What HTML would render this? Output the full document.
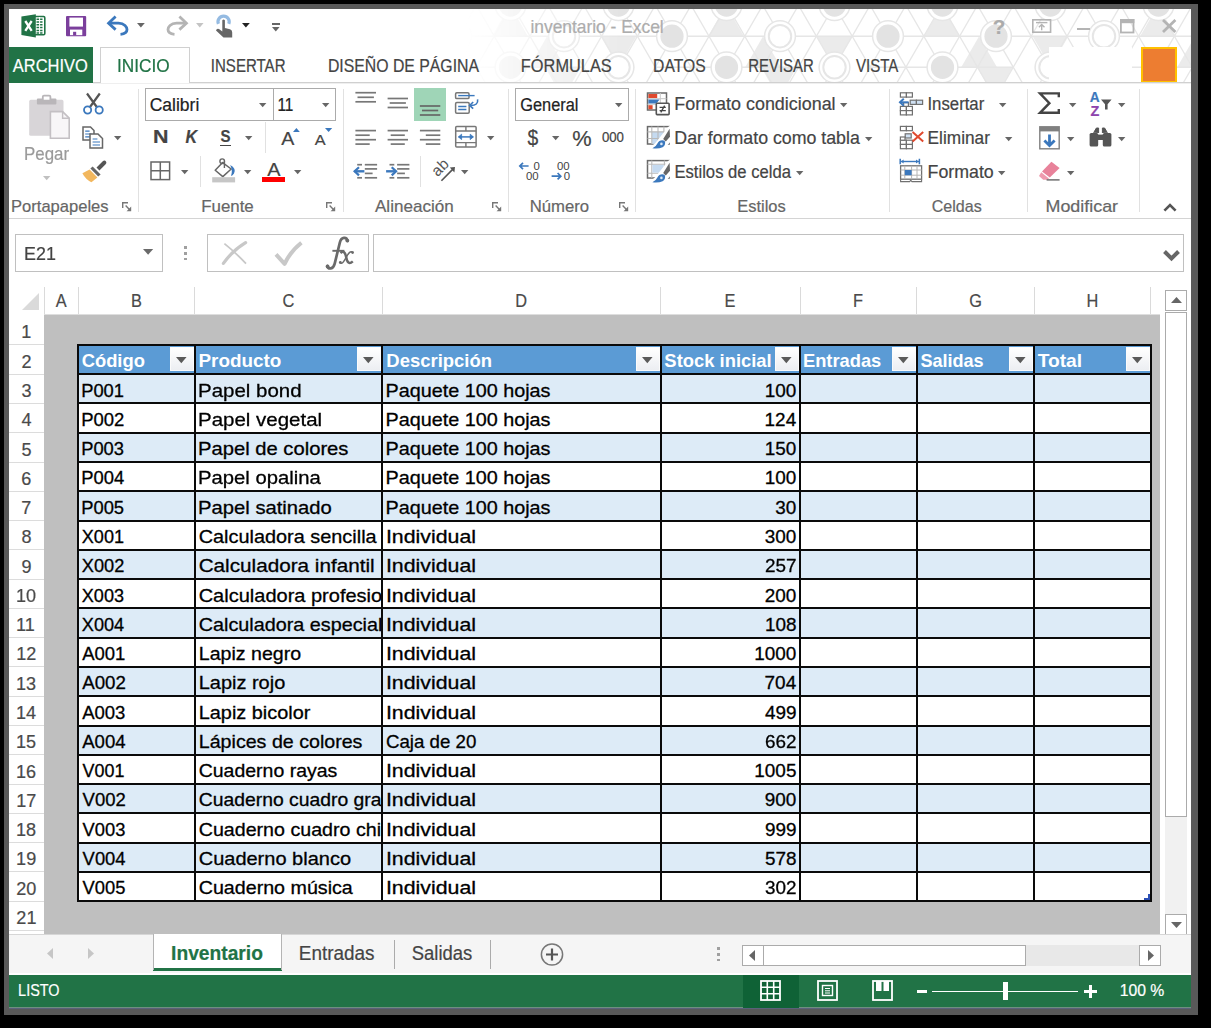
<!DOCTYPE html>
<html><head><meta charset="utf-8"><title>inventario - Excel</title><style>
html,body{margin:0;padding:0;background:#000;}
body{width:1211px;height:1028px;position:relative;overflow:hidden;font-family:"Liberation Sans",sans-serif;}
.a{position:absolute;box-sizing:border-box;}
.t{position:absolute;white-space:pre;line-height:1;transform-origin:0 0;-webkit-text-stroke:0.2px;}
svg{overflow:visible;}
</style></head><body>
<div class="a " style="left:4px;top:4px;width:1194px;height:1011px;background:#595959;"></div>
<div class="a " style="left:9px;top:9px;width:1182px;height:999px;background:#fff;"></div>
<div class="a" style="left:451px;top:9px;width:740px;height:74px;overflow:hidden;-webkit-mask-image:linear-gradient(90deg,transparent 15px,#000 170px);mask-image:linear-gradient(90deg,transparent 15px,#000 170px);"><svg width="740" height="74" viewBox="0 0 740 74" style="position:absolute;left:0;top:0"><path d="M-282.4 27.2 L-246.6 27.2 L-264.5 58.3Z" fill="#ebebeb"/><path d="M-174.9 27.2 L-139.1 27.2 L-157.0 -3.9Z" fill="#ebebeb"/><path d="M-121.9 58.3 L-86.1 58.3 L-104.0 89.4Z" fill="#ebebeb"/><path d="M-353.8 58.3 L-318.0 58.3 L-335.9 27.2Z" fill="#ebebeb"/><path d="M-66.4 27.2 L-30.6 27.2 L-48.5 58.3Z" fill="#ebebeb"/><path d="M41.1 27.2 L76.9 27.2 L59.0 -3.9Z" fill="#ebebeb"/><path d="M94.1 58.3 L129.9 58.3 L112.0 89.4Z" fill="#ebebeb"/><path d="M-137.8 58.3 L-102.0 58.3 L-119.9 27.2Z" fill="#ebebeb"/><path d="M149.6 27.2 L185.4 27.2 L167.5 58.3Z" fill="#ebebeb"/><path d="M257.1 27.2 L292.9 27.2 L275.0 -3.9Z" fill="#ebebeb"/><path d="M310.1 58.3 L345.9 58.3 L328.0 89.4Z" fill="#ebebeb"/><path d="M78.2 58.3 L114.0 58.3 L96.1 27.2Z" fill="#ebebeb"/><path d="M365.6 27.2 L401.4 27.2 L383.5 58.3Z" fill="#ebebeb"/><path d="M473.1 27.2 L508.9 27.2 L491.0 -3.9Z" fill="#ebebeb"/><path d="M526.1 58.3 L561.9 58.3 L544.0 89.4Z" fill="#ebebeb"/><path d="M294.2 58.3 L330.0 58.3 L312.1 27.2Z" fill="#ebebeb"/><path d="M581.6 27.2 L617.4 27.2 L599.5 58.3Z" fill="#ebebeb"/><path d="M689.1 27.2 L724.9 27.2 L707.0 -3.9Z" fill="#ebebeb"/><path d="M742.1 58.3 L777.9 58.3 L760.0 89.4Z" fill="#ebebeb"/><path d="M510.2 58.3 L546.0 58.3 L528.1 27.2Z" fill="#ebebeb"/><path d="M797.6 27.2 L833.4 27.2 L815.5 58.3Z" fill="#ebebeb"/><path d="M905.1 27.2 L940.9 27.2 L923.0 -3.9Z" fill="#ebebeb"/><path d="M958.1 58.3 L993.9 58.3 L976.0 89.4Z" fill="#ebebeb"/><path d="M726.2 58.3 L762.0 58.3 L744.1 27.2Z" fill="#ebebeb"/><path d="M1013.6 27.2 L1049.4 27.2 L1031.5 58.3Z" fill="#ebebeb"/><path d="M1121.1 27.2 L1156.9 27.2 L1139.0 -3.9Z" fill="#ebebeb"/><path d="M1174.1 58.3 L1209.9 58.3 L1192.0 89.4Z" fill="#ebebeb"/><path d="M942.2 58.3 L978.0 58.3 L960.1 27.2Z" fill="#ebebeb"/><path d="M0 27.2H740" stroke="#e6e6e6" stroke-width="1.4"/><path d="M-228.6 58.3H-85.4" stroke="#e6e6e6" stroke-width="1.4"/><path d="M-12.6 58.3H130.6" stroke="#e6e6e6" stroke-width="1.4"/><path d="M203.4 58.3H346.6" stroke="#e6e6e6" stroke-width="1.4"/><path d="M419.4 58.3H562.6" stroke="#e6e6e6" stroke-width="1.4"/><path d="M635.4 58.3H778.6" stroke="#e6e6e6" stroke-width="1.4"/><path d="M851.4 58.3H994.6" stroke="#e6e6e6" stroke-width="1.4"/><path d="M1067.4 58.3H1210.6" stroke="#e6e6e6" stroke-width="1.4"/><path d="M1283.4 58.3H1426.6" stroke="#e6e6e6" stroke-width="1.4"/><path d="M-85.7 -10 L-31.4 84" stroke="#e6e6e6" stroke-width="1.3" fill="none"/><path d="M-42.7 -10 L-97.0 84" stroke="#e6e6e6" stroke-width="1.3" fill="none"/><path d="M-49.9 -10 L4.4 84" stroke="#e6e6e6" stroke-width="1.3" fill="none"/><path d="M-6.9 -10 L-61.2 84" stroke="#e6e6e6" stroke-width="1.3" fill="none"/><path d="M-14.1 -10 L40.2 84" stroke="#e6e6e6" stroke-width="1.3" fill="none"/><path d="M28.9 -10 L-25.4 84" stroke="#e6e6e6" stroke-width="1.3" fill="none"/><path d="M21.7 -10 L76.0 84" stroke="#e6e6e6" stroke-width="1.3" fill="none"/><path d="M64.7 -10 L10.4 84" stroke="#e6e6e6" stroke-width="1.3" fill="none"/><path d="M57.5 -10 L111.8 84" stroke="#e6e6e6" stroke-width="1.3" fill="none"/><path d="M100.5 -10 L46.2 84" stroke="#e6e6e6" stroke-width="1.3" fill="none"/><path d="M93.3 -10 L147.6 84" stroke="#e6e6e6" stroke-width="1.3" fill="none"/><path d="M136.3 -10 L82.0 84" stroke="#e6e6e6" stroke-width="1.3" fill="none"/><path d="M129.1 -10 L183.4 84" stroke="#e6e6e6" stroke-width="1.3" fill="none"/><path d="M172.1 -10 L117.8 84" stroke="#e6e6e6" stroke-width="1.3" fill="none"/><path d="M164.9 -10 L219.2 84" stroke="#e6e6e6" stroke-width="1.3" fill="none"/><path d="M207.9 -10 L153.6 84" stroke="#e6e6e6" stroke-width="1.3" fill="none"/><path d="M200.7 -10 L255.0 84" stroke="#e6e6e6" stroke-width="1.3" fill="none"/><path d="M243.7 -10 L189.4 84" stroke="#e6e6e6" stroke-width="1.3" fill="none"/><path d="M236.5 -10 L290.8 84" stroke="#e6e6e6" stroke-width="1.3" fill="none"/><path d="M279.5 -10 L225.2 84" stroke="#e6e6e6" stroke-width="1.3" fill="none"/><path d="M272.3 -10 L326.6 84" stroke="#e6e6e6" stroke-width="1.3" fill="none"/><path d="M315.3 -10 L261.0 84" stroke="#e6e6e6" stroke-width="1.3" fill="none"/><path d="M308.1 -10 L362.4 84" stroke="#e6e6e6" stroke-width="1.3" fill="none"/><path d="M351.1 -10 L296.8 84" stroke="#e6e6e6" stroke-width="1.3" fill="none"/><path d="M343.9 -10 L398.2 84" stroke="#e6e6e6" stroke-width="1.3" fill="none"/><path d="M386.9 -10 L332.6 84" stroke="#e6e6e6" stroke-width="1.3" fill="none"/><path d="M379.7 -10 L434.0 84" stroke="#e6e6e6" stroke-width="1.3" fill="none"/><path d="M422.7 -10 L368.4 84" stroke="#e6e6e6" stroke-width="1.3" fill="none"/><path d="M415.5 -10 L469.8 84" stroke="#e6e6e6" stroke-width="1.3" fill="none"/><path d="M458.5 -10 L404.2 84" stroke="#e6e6e6" stroke-width="1.3" fill="none"/><path d="M451.3 -10 L505.6 84" stroke="#e6e6e6" stroke-width="1.3" fill="none"/><path d="M494.3 -10 L440.0 84" stroke="#e6e6e6" stroke-width="1.3" fill="none"/><path d="M487.1 -10 L541.4 84" stroke="#e6e6e6" stroke-width="1.3" fill="none"/><path d="M530.1 -10 L475.8 84" stroke="#e6e6e6" stroke-width="1.3" fill="none"/><path d="M522.9 -10 L577.2 84" stroke="#e6e6e6" stroke-width="1.3" fill="none"/><path d="M565.9 -10 L511.6 84" stroke="#e6e6e6" stroke-width="1.3" fill="none"/><path d="M558.7 -10 L613.0 84" stroke="#e6e6e6" stroke-width="1.3" fill="none"/><path d="M601.7 -10 L547.4 84" stroke="#e6e6e6" stroke-width="1.3" fill="none"/><path d="M594.5 -10 L648.8 84" stroke="#e6e6e6" stroke-width="1.3" fill="none"/><path d="M637.5 -10 L583.2 84" stroke="#e6e6e6" stroke-width="1.3" fill="none"/><path d="M630.3 -10 L684.6 84" stroke="#e6e6e6" stroke-width="1.3" fill="none"/><path d="M673.3 -10 L619.0 84" stroke="#e6e6e6" stroke-width="1.3" fill="none"/><path d="M666.1 -10 L720.4 84" stroke="#e6e6e6" stroke-width="1.3" fill="none"/><path d="M709.1 -10 L654.8 84" stroke="#e6e6e6" stroke-width="1.3" fill="none"/><path d="M701.9 -10 L756.2 84" stroke="#e6e6e6" stroke-width="1.3" fill="none"/><path d="M744.9 -10 L690.6 84" stroke="#e6e6e6" stroke-width="1.3" fill="none"/><path d="M737.7 -10 L792.0 84" stroke="#e6e6e6" stroke-width="1.3" fill="none"/><path d="M780.7 -10 L726.4 84" stroke="#e6e6e6" stroke-width="1.3" fill="none"/><path d="M773.5 -10 L827.8 84" stroke="#e6e6e6" stroke-width="1.3" fill="none"/><path d="M816.5 -10 L762.2 84" stroke="#e6e6e6" stroke-width="1.3" fill="none"/><path d="M809.3 -10 L863.6 84" stroke="#e6e6e6" stroke-width="1.3" fill="none"/><path d="M852.3 -10 L798.0 84" stroke="#e6e6e6" stroke-width="1.3" fill="none"/><circle cx="5.0" cy="27.2" r="15.4" fill="#fff" stroke="#e6e6e6" stroke-width="1.5"/><circle cx="5.0" cy="27.2" r="11.6" fill="#e3e3e3"/><circle cx="-48.5" cy="58.3" r="15.4" fill="#fff" stroke="#e6e6e6" stroke-width="1.5"/><circle cx="-48.5" cy="58.3" r="11.2" fill="#fff" stroke="#e6e6e6" stroke-width="2"/><circle cx="-48.5" cy="-3.9" r="15.4" fill="#fff" stroke="#e6e6e6" stroke-width="1.5"/><circle cx="-48.5" cy="-3.9" r="11.6" fill="#e3e3e3"/><circle cx="113.0" cy="27.2" r="15.4" fill="#fff" stroke="#e6e6e6" stroke-width="1.5"/><circle cx="113.0" cy="27.2" r="11.2" fill="#fff" stroke="#e6e6e6" stroke-width="2"/><circle cx="59.5" cy="58.3" r="15.4" fill="#fff" stroke="#e6e6e6" stroke-width="1.5"/><circle cx="59.5" cy="58.3" r="11.6" fill="#e3e3e3"/><circle cx="59.5" cy="-3.9" r="15.4" fill="#fff" stroke="#e6e6e6" stroke-width="1.5"/><circle cx="59.5" cy="-3.9" r="11.6" fill="#e3e3e3"/><circle cx="221.0" cy="27.2" r="15.4" fill="#fff" stroke="#e6e6e6" stroke-width="1.5"/><circle cx="221.0" cy="27.2" r="11.6" fill="#e3e3e3"/><circle cx="167.5" cy="58.3" r="15.4" fill="#fff" stroke="#e6e6e6" stroke-width="1.5"/><circle cx="167.5" cy="58.3" r="11.2" fill="#fff" stroke="#e6e6e6" stroke-width="2"/><circle cx="167.5" cy="-3.9" r="15.4" fill="#fff" stroke="#e6e6e6" stroke-width="1.5"/><circle cx="167.5" cy="-3.9" r="11.6" fill="#e3e3e3"/><circle cx="329.0" cy="27.2" r="15.4" fill="#fff" stroke="#e6e6e6" stroke-width="1.5"/><circle cx="329.0" cy="27.2" r="11.2" fill="#fff" stroke="#e6e6e6" stroke-width="2"/><circle cx="275.5" cy="58.3" r="15.4" fill="#fff" stroke="#e6e6e6" stroke-width="1.5"/><circle cx="275.5" cy="58.3" r="11.6" fill="#e3e3e3"/><circle cx="275.5" cy="-3.9" r="15.4" fill="#fff" stroke="#e6e6e6" stroke-width="1.5"/><circle cx="275.5" cy="-3.9" r="11.6" fill="#e3e3e3"/><circle cx="437.0" cy="27.2" r="15.4" fill="#fff" stroke="#e6e6e6" stroke-width="1.5"/><circle cx="437.0" cy="27.2" r="11.6" fill="#e3e3e3"/><circle cx="383.5" cy="58.3" r="15.4" fill="#fff" stroke="#e6e6e6" stroke-width="1.5"/><circle cx="383.5" cy="58.3" r="11.2" fill="#fff" stroke="#e6e6e6" stroke-width="2"/><circle cx="383.5" cy="-3.9" r="15.4" fill="#fff" stroke="#e6e6e6" stroke-width="1.5"/><circle cx="383.5" cy="-3.9" r="11.6" fill="#e3e3e3"/><circle cx="545.0" cy="27.2" r="15.4" fill="#fff" stroke="#e6e6e6" stroke-width="1.5"/><circle cx="545.0" cy="27.2" r="11.6" fill="#e3e3e3"/><circle cx="491.5" cy="58.3" r="15.4" fill="#fff" stroke="#e6e6e6" stroke-width="1.5"/><circle cx="491.5" cy="58.3" r="11.6" fill="#e3e3e3"/><circle cx="491.5" cy="-3.9" r="15.4" fill="#fff" stroke="#e6e6e6" stroke-width="1.5"/><circle cx="491.5" cy="-3.9" r="11.6" fill="#e3e3e3"/><circle cx="653.0" cy="27.2" r="15.4" fill="#fff" stroke="#e6e6e6" stroke-width="1.5"/><circle cx="653.0" cy="27.2" r="11.2" fill="#fff" stroke="#e6e6e6" stroke-width="2"/><circle cx="599.5" cy="58.3" r="15.4" fill="#fff" stroke="#e6e6e6" stroke-width="1.5"/><circle cx="599.5" cy="58.3" r="11.2" fill="#fff" stroke="#e6e6e6" stroke-width="2"/><circle cx="599.5" cy="-3.9" r="15.4" fill="#fff" stroke="#e6e6e6" stroke-width="1.5"/><circle cx="599.5" cy="-3.9" r="11.6" fill="#e3e3e3"/><circle cx="761.0" cy="27.2" r="15.4" fill="#fff" stroke="#e6e6e6" stroke-width="1.5"/><circle cx="761.0" cy="27.2" r="11.2" fill="#fff" stroke="#e6e6e6" stroke-width="2"/><circle cx="707.5" cy="58.3" r="15.4" fill="#fff" stroke="#e6e6e6" stroke-width="1.5"/><circle cx="707.5" cy="58.3" r="11.6" fill="#e3e3e3"/><circle cx="707.5" cy="-3.9" r="15.4" fill="#fff" stroke="#e6e6e6" stroke-width="1.5"/><circle cx="707.5" cy="-3.9" r="11.6" fill="#e3e3e3"/></svg></div>
<svg class="a" style="left:21px;top:14px;" width="25" height="24" viewBox="0 0 25 24"><rect x="13" y="2.5" width="10.8" height="18.2" rx="1.2" fill="#fff" stroke="#217346" stroke-width="1.6"/><path d="M15.5 5.2H21.5M15.5 8H21.5M15.5 10.8H21.5M15.5 13.6H21.5M15.5 16.4H21.5M15.5 19H21.5" stroke="#217346" stroke-width="1.5"/><path d="M18.6 3V20" stroke="#fff" stroke-width="1"/><path d="M0.4 2.6 L14.8 0.2 L14.8 23.6 L0.4 20.9Z" fill="#217346"/><path d="M4.3 7 L10.7 16.8 M10.7 7 L4.3 16.8" stroke="#fff" stroke-width="2.3" fill="none"/></svg>
<svg class="a" style="left:65.7px;top:15.8px;" width="20.2" height="20.2" viewBox="0 0 20.2 20.2"><rect x="0" y="0" width="20.2" height="20.2" rx="1" fill="#7b3f9c"/><rect x="3.4" y="1.6" width="13.6" height="9" fill="#fff"/><rect x="4" y="13.6" width="12.3" height="5.6" fill="#fff"/><rect x="7.1" y="15.8" width="3.1" height="3.6" fill="#7b3f9c"/></svg>
<svg class="a" style="left:107px;top:15px;" width="23" height="21" viewBox="0 0 23 21"><path d="M2 8.2 H11.5 C17.5 8.2 20 12 20 14.5 C20 17.3 17 19 13.5 19.3" fill="none" stroke="#3b78bd" stroke-width="2.8"/><path d="M8.6 1.6 L1.6 8.2 L8.6 14.6" fill="none" stroke="#3b78bd" stroke-width="2.8"/></svg>
<svg class="a" style="left:137.2px;top:23.2px;" width="7.8" height="4.6" viewBox="0 0 7.8 4.6"><path d="M0 0 L7.8 0 L3.9 4.6Z" fill="#666"/></svg>
<svg class="a" style="left:165px;top:15px;" width="23" height="21" viewBox="0 0 23 21"><path d="M21 8.2 H11.5 C5.5 8.2 3 12 3 14.5 C3 17.3 6 19 9.5 19.3" fill="none" stroke="#b4b4b4" stroke-width="2.8"/><path d="M14.4 1.6 L21.4 8.2 L14.4 14.6" fill="none" stroke="#b4b4b4" stroke-width="2.8"/></svg>
<svg class="a" style="left:195.8px;top:23.2px;" width="7.6" height="4.4" viewBox="0 0 7.6 4.4"><path d="M0 0 L7.6 0 L3.8 4.4Z" fill="#c4c4c4"/></svg>
<svg class="a" style="left:214px;top:13px;" width="20" height="26" viewBox="0 0 20 26"><path d="M4.4 10.8 A5.6 5.6 0 1 1 14.8 10.8" fill="none" stroke="#95bbe2" stroke-width="3.2"/><path d="M8.3 7.2 Q9.6 6 10.9 7.2 V15 L16 16.2 Q18.4 17 18.2 19.5 V24.6 H9.5 L2 17.4 Q2.6 15.2 5 16 L8.3 18.4Z" fill="#666"/></svg>
<svg class="a" style="left:242.3px;top:23.2px;" width="7.8" height="4.6" viewBox="0 0 7.8 4.6"><path d="M0 0 L7.8 0 L3.9 4.6Z" fill="#222"/></svg>
<div class="a " style="left:272px;top:22.6px;width:7.6px;height:2px;background:#666;"></div>
<svg class="a" style="left:272px;top:27.4px;" width="7.6" height="4.6" viewBox="0 0 7.6 4.6"><path d="M0 0 L7.6 0 L3.8 4.6Z" fill="#666"/></svg>
<span class="t" style="left:530px;top:18px;font-size:18.6px;color:#adadad;transform:translateX(0.44px) scaleX(0.9346);">inventario - Excel</span>
<span class="t" style="left:992px;top:18px;font-size:19.6px;color:#ababab;font-weight:700;transform:translateX(0.86px) scaleX(1.0459);">?</span>
<svg class="a" style="left:1031.8px;top:19.2px;" width="19.4" height="14" viewBox="0 0 19.4 14"><rect x="0.8" y="0.8" width="17.8" height="12.4" fill="none" stroke="#b4b4b4" stroke-width="1.6"/><path d="M4 3.6 H15.4" stroke="#b4b4b4" stroke-width="1.4"/><path d="M9.7 11.2 V5.6 M6.9 8.2 L9.7 5.4 L12.5 8.2" stroke="#b4b4b4" stroke-width="1.4" fill="none"/></svg>
<div class="a " style="left:1076.6px;top:27.6px;width:13.6px;height:2.8px;background:#b4b4b4;"></div>
<svg class="a" style="left:1119.8px;top:19px;" width="14.4" height="14.4" viewBox="0 0 14.4 14.4"><rect x="0.9" y="0.9" width="12.6" height="12.6" fill="none" stroke="#b4b4b4" stroke-width="1.8"/><rect x="0" y="0" width="14.4" height="4.2" fill="#b4b4b4"/></svg>
<svg class="a" style="left:1162.2px;top:19.2px;" width="14.4" height="14" viewBox="0 0 14.4 14"><path d="M1 1 L13.4 13 M13.4 1 L1 13" stroke="#b4b4b4" stroke-width="2.8" fill="none"/></svg>
<div class="a " style="left:1049px;top:47px;width:83px;height:35px;background:#fff;"></div>
<div class="a " style="left:1141px;top:47px;width:36px;height:36px;background:#ed7d31;border:2px solid #ffc000;"></div>
<div class="a " style="left:9px;top:47px;width:84px;height:36px;background:#217346;"></div>
<span class="t" style="left:12px;top:58px;font-size:17.5px;color:#fff;transform:translateX(0.77px) scaleX(0.9409);">ARCHIVO</span>
<div class="a " style="left:93px;top:82px;width:1098px;height:1px;background:#d0d0d0;"></div>
<div class="a " style="left:93px;top:83px;width:1098px;height:1px;background:#efefef;"></div>
<div class="a " style="left:100px;top:47px;width:90px;height:36px;background:#fff;border:1px solid #d0d0d0;border-bottom:none;"></div>
<span class="t" style="left:117px;top:58px;font-size:17.5px;color:#217346;transform:scaleX(0.9839);">INICIO</span>
<span class="t" style="left:210px;top:58px;font-size:17.5px;color:#444;transform:translateX(0.81px) scaleX(0.8599);">INSERTAR</span>
<span class="t" style="left:327px;top:58px;font-size:17.5px;color:#444;transform:translateX(0.90px) scaleX(0.9036);">DISEÑO DE PÁGINA</span>
<span class="t" style="left:520px;top:58px;font-size:17.5px;color:#444;transform:translateX(0.86px) scaleX(0.9348);">FÓRMULAS</span>
<span class="t" style="left:653px;top:58px;font-size:17.5px;color:#444;transform:translateX(0.11px) scaleX(0.8958);">DATOS</span>
<span class="t" style="left:748px;top:58px;font-size:17.5px;color:#444;transform:translateX(0.17px) scaleX(0.8555);">REVISAR</span>
<span class="t" style="left:855px;top:58px;font-size:17.5px;color:#444;transform:translateX(0.93px) scaleX(0.8601);">VISTA</span>
<div class="a " style="left:138px;top:89px;width:1px;height:123px;background:#e1e1e1;"></div>
<div class="a " style="left:343px;top:89px;width:1px;height:123px;background:#e1e1e1;"></div>
<div class="a " style="left:508px;top:89px;width:1px;height:123px;background:#e1e1e1;"></div>
<div class="a " style="left:635px;top:89px;width:1px;height:123px;background:#e1e1e1;"></div>
<div class="a " style="left:889px;top:89px;width:1px;height:123px;background:#e1e1e1;"></div>
<div class="a " style="left:1027px;top:89px;width:1px;height:123px;background:#e1e1e1;"></div>
<div class="a " style="left:1139px;top:89px;width:1px;height:123px;background:#e1e1e1;"></div>
<span class="t" style="left:11px;top:198px;font-size:16.4px;color:#666;transform:translateX(0.04px) scaleX(1.0094);">Portapapeles</span>
<svg class="a" style="left:122px;top:202px;" width="10" height="10" viewBox="0 0 10 10"><path d="M0.7 6 V0.7 H6" fill="none" stroke="#777" stroke-width="1.4"/><path d="M3.6 3.6 L8.4 8.4" stroke="#777" stroke-width="1.4"/><path d="M9.2 4.6 V9.2 H4.6Z" fill="#777"/></svg>
<span class="t" style="left:201px;top:198px;font-size:16.4px;color:#666;transform:translateX(0.22px) scaleX(1.0289);">Fuente</span>
<svg class="a" style="left:326px;top:202px;" width="10" height="10" viewBox="0 0 10 10"><path d="M0.7 6 V0.7 H6" fill="none" stroke="#777" stroke-width="1.4"/><path d="M3.6 3.6 L8.4 8.4" stroke="#777" stroke-width="1.4"/><path d="M9.2 4.6 V9.2 H4.6Z" fill="#777"/></svg>
<span class="t" style="left:374px;top:198px;font-size:16.4px;color:#666;transform:translateX(0.97px) scaleX(1.0405);">Alineación</span>
<svg class="a" style="left:491.5px;top:202px;" width="10" height="10" viewBox="0 0 10 10"><path d="M0.7 6 V0.7 H6" fill="none" stroke="#777" stroke-width="1.4"/><path d="M3.6 3.6 L8.4 8.4" stroke="#777" stroke-width="1.4"/><path d="M9.2 4.6 V9.2 H4.6Z" fill="#777"/></svg>
<span class="t" style="left:529px;top:198px;font-size:16.4px;color:#666;transform:translateX(0.63px) scaleX(1.0196);">Número</span>
<svg class="a" style="left:619px;top:202px;" width="10" height="10" viewBox="0 0 10 10"><path d="M0.7 6 V0.7 H6" fill="none" stroke="#777" stroke-width="1.4"/><path d="M3.6 3.6 L8.4 8.4" stroke="#777" stroke-width="1.4"/><path d="M9.2 4.6 V9.2 H4.6Z" fill="#777"/></svg>
<span class="t" style="left:737px;top:198px;font-size:16.4px;color:#666;transform:translateX(0.25px) scaleX(1.0051);">Estilos</span>
<span class="t" style="left:931px;top:198px;font-size:16.4px;color:#666;transform:translateX(0.78px) scaleX(0.9794);">Celdas</span>
<span class="t" style="left:1045px;top:198px;font-size:16.4px;color:#666;transform:translateX(0.53px) scaleX(1.0907);">Modificar</span>
<svg class="a" style="left:1163px;top:202.6px;" width="14" height="9" viewBox="0 0 14 9"><path d="M1.4 7.6 L7 2 L12.6 7.6" fill="none" stroke="#555" stroke-width="2.6"/></svg>
<svg class="a" style="left:28px;top:94px;" width="43" height="46" viewBox="0 0 43 46"><rect x="1.2" y="5.8" width="34.3" height="36" rx="1.6" fill="#d8d5d8"/><rect x="8.9" y="4.4" width="19.5" height="6.2" rx="1" fill="#b9b6b9"/><rect x="14.8" y="1.6" width="7.6" height="5" rx="1.2" fill="#fff" stroke="#b9b6b9" stroke-width="1.8"/><path d="M22.4 17.6 H34.6 L41.2 24.2 V44.2 H22.4Z" fill="#f8f6f8" stroke="#c4c0c4" stroke-width="1.6"/><path d="M34.6 17.6 V24.2 H41.2" fill="none" stroke="#c4c0c4" stroke-width="1.4"/></svg>
<span class="t" style="left:24px;top:146px;font-size:17.5px;color:#9a9a9a;transform:scaleX(0.9650);">Pegar</span>
<svg class="a" style="left:42.8px;top:175.9px;" width="7.4" height="4.2" viewBox="0 0 7.4 4.2"><path d="M0 0 L7.4 0 L3.7 4.2Z" fill="#c0c0c0"/></svg>
<svg class="a" style="left:82px;top:92px;" width="23" height="23" viewBox="0 0 23 23"><path d="M5 1.5 L14.8 15 M17.8 1.5 L8 15" stroke="#555" stroke-width="2.2" fill="none"/><circle cx="5.6" cy="18" r="3.6" fill="none" stroke="#3b78bd" stroke-width="1.8"/><circle cx="17.2" cy="18" r="3.6" fill="none" stroke="#3b78bd" stroke-width="1.8"/></svg>
<svg class="a" style="left:82px;top:126px;" width="22" height="23" viewBox="0 0 22 23"><path d="M1 1 H8.5 L12 4.5 V14 H1Z" fill="#fff" stroke="#666" stroke-width="1.5"/><path d="M3.2 5.2H7.6M3.2 8H9.4M3.2 10.8H9.4" stroke="#3b78bd" stroke-width="1.2"/><path d="M8 8 H16 L20.5 12.5 V22 H8Z" fill="#fff" stroke="#666" stroke-width="1.5"/><path d="M10.6 13H15.4M10.6 16H18M10.6 19H18" stroke="#3b78bd" stroke-width="1.2"/></svg>
<svg class="a" style="left:113.8px;top:136.4px;" width="7.4" height="4.2" viewBox="0 0 7.4 4.2"><path d="M0 0 L7.4 0 L3.7 4.2Z" fill="#666"/></svg>
<svg class="a" style="left:81px;top:159px;" width="27" height="24" viewBox="0 0 27 24"><path d="M15.5 8.5 L21.5 2.5 Q23.6 0.8 25 2.4 Q26.2 4 24.4 5.6 L18.4 11.4Z" fill="#555"/><path d="M11.6 7.4 L19.6 15.4 L17.2 17.6 L9.4 9.6Z" fill="#666"/><path d="M8.6 10.6 L16.4 18.4 L10.4 23.2 Q4.6 20.4 1.4 14.2Z" fill="#f2b75e"/></svg>
<div class="a " style="left:145px;top:88px;width:129px;height:33px;background:#fff;border:1px solid #ababab;"></div>
<span class="t" style="left:149px;top:97px;font-size:17.5px;color:#222;transform:translateX(0.71px);">Calibri</span>
<svg class="a" style="left:258.8px;top:103.4px;" width="7.4" height="4.2" viewBox="0 0 7.4 4.2"><path d="M0 0 L7.4 0 L3.7 4.2Z" fill="#666"/></svg>
<div class="a " style="left:273px;top:88px;width:63px;height:33px;background:#fff;border:1px solid #ababab;"></div>
<span class="t" style="left:277px;top:97px;font-size:17.5px;color:#222;transform:translateX(0.43px) scaleX(0.8797);">11</span>
<svg class="a" style="left:321.8px;top:103.4px;" width="7.4" height="4.2" viewBox="0 0 7.4 4.2"><path d="M0 0 L7.4 0 L3.7 4.2Z" fill="#666"/></svg>
<span class="t" style="left:152px;top:129px;font-size:17.6px;color:#444;font-weight:700;transform:translateX(0.97px) scaleX(1.2178);">N</span>
<span class="t" style="left:185px;top:129px;font-size:17.6px;color:#444;font-weight:700;font-style:italic;transform:translateX(0.52px) scaleX(0.9208);">K</span>
<span class="t" style="left:220px;top:129px;font-size:16.6px;color:#444;font-weight:700;transform:translateX(0.57px) scaleX(0.9049);">S</span>
<div class="a " style="left:219.6px;top:144.6px;width:11.4px;height:1.7px;background:#444;"></div>
<svg class="a" style="left:244.8px;top:136.4px;" width="7.4" height="4.2" viewBox="0 0 7.4 4.2"><path d="M0 0 L7.4 0 L3.7 4.2Z" fill="#666"/></svg>
<div class="a " style="left:265px;top:122px;width:1px;height:31px;background:#e1e1e1;"></div>
<span class="t" style="left:281px;top:129px;font-size:19px;color:#444;transform:translateX(0.36px) scaleX(1.0319);">A</span>
<svg class="a" style="left:292.9px;top:127.5px;" width="6.8" height="4" viewBox="0 0 6.8 4"><path d="M0 4 L6.8 4 L3.4 0Z" fill="#3b78bd"/></svg>
<span class="t" style="left:314px;top:133px;font-size:14.4px;color:#444;transform:translateX(0.87px) scaleX(1.1311);">A</span>
<svg class="a" style="left:324.8px;top:127.5px;" width="7.2" height="4" viewBox="0 0 7.2 4"><path d="M0 0 L7.2 0 L3.6 4Z" fill="#3b78bd"/></svg>
<svg class="a" style="left:150px;top:161px;" width="21" height="20" viewBox="0 0 21 20"><rect x="1" y="1" width="18.6" height="17.6" fill="none" stroke="#666" stroke-width="1.5"/><path d="M10.3 1 V18.6 M1 9.8 H19.6" stroke="#666" stroke-width="1.5"/></svg>
<svg class="a" style="left:180.8px;top:169.9px;" width="7.4" height="4.2" viewBox="0 0 7.4 4.2"><path d="M0 0 L7.4 0 L3.7 4.2Z" fill="#666"/></svg>
<div class="a " style="left:200px;top:156px;width:1px;height:31px;background:#e1e1e1;"></div>
<svg class="a" style="left:0px;top:0px;" width="400" height="230" viewBox="0 0 400 230"><path d="M215.2 170.2 L222.6 162.6 L231.2 169 L222.8 176.6Z" fill="#fff" stroke="#666" stroke-width="1.5" stroke-linejoin="round"/><circle cx="222.2" cy="161.2" r="2.3" fill="none" stroke="#666" stroke-width="1.4"/><path d="M224.4 161.4V168" stroke="#666" stroke-width="1.4"/><path d="M230.2 165 Q236.6 168.6 234 173.4 Q232.6 175.6 231 176 Q233 171 230.2 165Z" fill="#3b78bd"/><rect x="212.2" y="177.2" width="22.9" height="5.2" fill="#c6c6c6"/></svg>
<svg class="a" style="left:243.8px;top:169.9px;" width="7.4" height="4.2" viewBox="0 0 7.4 4.2"><path d="M0 0 L7.4 0 L3.7 4.2Z" fill="#666"/></svg>
<span class="t" style="left:267px;top:161px;font-size:18.6px;color:#444;transform:translateX(0.26px) scaleX(1.0703);">A</span>
<div class="a " style="left:261.5px;top:177px;width:23.5px;height:5.2px;background:#f00;"></div>
<svg class="a" style="left:293.8px;top:169.9px;" width="7.4" height="4.2" viewBox="0 0 7.4 4.2"><path d="M0 0 L7.4 0 L3.7 4.2Z" fill="#666"/></svg>
<div class="a " style="left:414px;top:88px;width:32px;height:33px;background:#9fd5b7;"></div>
<svg class="a" style="left:487.1px;top:136.1px;" width="7.4" height="4.2" viewBox="0 0 7.4 4.2"><path d="M0 0 L7.4 0 L3.7 4.2Z" fill="#666"/></svg>
<div class="a " style="left:420px;top:156px;width:1px;height:31px;background:#e1e1e1;"></div>
<svg class="a" style="left:460.90000000000003px;top:169.9px;" width="7.4" height="4.2" viewBox="0 0 7.4 4.2"><path d="M0 0 L7.4 0 L3.7 4.2Z" fill="#666"/></svg>
<svg class="a" style="left:0px;top:0px;" width="1211" height="230" viewBox="0 0 1211 230"><path d="M355.4 92.7H376.0" stroke="#777" stroke-width="1.7"/><path d="M357.5 97.3H373.9" stroke="#777" stroke-width="1.7"/><path d="M355.4 101.8H376.0" stroke="#777" stroke-width="1.7"/><path d="M387.6 98.5H408.0" stroke="#777" stroke-width="1.7"/><path d="M389.70000000000005 103.0H405.9" stroke="#777" stroke-width="1.7"/><path d="M387.6 107.5H408.0" stroke="#777" stroke-width="1.7"/><path d="M355.4 130.6H376.0" stroke="#777" stroke-width="1.7"/><path d="M355.4 135.2H369.7" stroke="#777" stroke-width="1.7"/><path d="M355.4 139.7H376.0" stroke="#777" stroke-width="1.7"/><path d="M355.4 144.1H369.7" stroke="#777" stroke-width="1.7"/><path d="M387.6 130.6H408.0" stroke="#777" stroke-width="1.7"/><path d="M390.7 135.2H404.8" stroke="#777" stroke-width="1.7"/><path d="M387.6 139.7H408.0" stroke="#777" stroke-width="1.7"/><path d="M390.7 144.1H404.8" stroke="#777" stroke-width="1.7"/><path d="M419.9 130.6H440.3" stroke="#777" stroke-width="1.7"/><path d="M425.8 135.2H440.3" stroke="#777" stroke-width="1.7"/><path d="M419.9 139.7H440.3" stroke="#777" stroke-width="1.7"/><path d="M425.8 144.1H440.3" stroke="#777" stroke-width="1.7"/><rect x="455.6" y="92.8" width="13.4" height="5.8" rx="1.2" fill="#fff" stroke="#777" stroke-width="1.5"/><rect x="455.6" y="102.6" width="13.6" height="10.6" rx="1.2" fill="#fff" stroke="#777" stroke-width="1.5"/><path d="M458.2 95.6H474.6" stroke="#3b78bd" stroke-width="1.4"/><path d="M458.2 106.4H466.4M458.2 109.6H466.4" stroke="#3b78bd" stroke-width="1.5"/><path d="M477.6 99.4 Q478.6 105.6 470.4 105.4" fill="none" stroke="#3b78bd" stroke-width="1.6"/><path d="M473.2 102 L469.6 105.4 L473.2 108.6" fill="none" stroke="#3b78bd" stroke-width="1.6"/><rect x="455.7" y="126.5" width="20.4" height="20.4" rx="1" fill="#fff" stroke="#777" stroke-width="1.5"/><path d="M455.7 131H476.1M455.7 142.6H476.1M465.9 126.5V131M465.9 142.6V146.9" stroke="#777" stroke-width="1.4"/><path d="M458.6 136.9H473.2" stroke="#3b78bd" stroke-width="1.5"/><path d="M461.6 134.2L458.4 136.9L461.6 139.6ZM470.2 134.2L473.4 136.9L470.2 139.6Z" fill="#3b78bd" stroke="#3b78bd" stroke-width="0.8"/><path d="M364.79999999999995 164.7H377.09999999999997" stroke="#777" stroke-width="1.7"/><path d="M364.79999999999995 168.9H377.09999999999997" stroke="#777" stroke-width="1.7"/><path d="M364.79999999999995 173.4H372.59999999999997" stroke="#777" stroke-width="1.7"/><path d="M364.79999999999995 177.8H377.09999999999997" stroke="#777" stroke-width="1.7"/><path d="M357.2 164.7H362.0" stroke="#777" stroke-width="1.7"/><path d="M357.2 177.8H362.0" stroke="#777" stroke-width="1.7"/><path d="M354.4 171.3H364.4" stroke="#3b78bd" stroke-width="2.4"/><path d="M359.0 167.2L354.59999999999997 171.3L359.0 175.4" fill="none" stroke="#3b78bd" stroke-width="2.2"/><path d="M397.09999999999997 164.7H409.4" stroke="#777" stroke-width="1.7"/><path d="M397.09999999999997 168.9H409.4" stroke="#777" stroke-width="1.7"/><path d="M397.09999999999997 173.4H404.9" stroke="#777" stroke-width="1.7"/><path d="M397.09999999999997 177.8H409.4" stroke="#777" stroke-width="1.7"/><path d="M389.5 164.7H394.3" stroke="#777" stroke-width="1.7"/><path d="M389.5 177.8H394.3" stroke="#777" stroke-width="1.7"/><path d="M386.09999999999997 171.3H396.09999999999997" stroke="#3b78bd" stroke-width="2.4"/><path d="M391.7 167.2L396.09999999999997 171.3L391.7 175.4" fill="none" stroke="#3b78bd" stroke-width="2.2"/><text transform="translate(437.6,177.2) rotate(-45)" font-family="Liberation Sans" font-size="15.5" fill="#555">ab</text><path d="M441.4 180.8L453.4 168.6" stroke="#555" stroke-width="1.6"/><path d="M455 167 L454.4 172.4 L449.8 167.6Z" fill="#555"/></svg>
<svg class="a" style="left:0px;top:0px;" width="1211" height="230" viewBox="0 0 1211 230"><path d="M419.9 106.0H440.3" stroke="#666" stroke-width="1.7"/><path d="M422.0 110.5H438.2" stroke="#666" stroke-width="1.7"/><path d="M419.9 115.0H440.3" stroke="#666" stroke-width="1.7"/></svg>
<div class="a " style="left:515px;top:88px;width:114px;height:33px;background:#fff;border:1px solid #ababab;"></div>
<span class="t" style="left:520px;top:97px;font-size:17.5px;color:#222;transform:translateX(0.18px) scaleX(0.9368);">General</span>
<svg class="a" style="left:614.8px;top:103.4px;" width="7.4" height="4.2" viewBox="0 0 7.4 4.2"><path d="M0 0 L7.4 0 L3.7 4.2Z" fill="#666"/></svg>
<span class="t" style="left:527px;top:127px;font-size:22px;color:#444;transform:translateX(0.39px) scaleX(0.8759);">$</span>
<svg class="a" style="left:551.8px;top:136.4px;" width="7.4" height="4.2" viewBox="0 0 7.4 4.2"><path d="M0 0 L7.4 0 L3.7 4.2Z" fill="#666"/></svg>
<span class="t" style="left:572px;top:128px;font-size:22px;color:#444;transform:translateX(0.22px) scaleX(0.9893);">%</span>
<span class="t" style="left:601px;top:131px;font-size:13.8px;color:#444;transform:translateX(0.88px) scaleX(0.9569);">000</span>
<svg class="a" style="left:519px;top:161px;" width="23" height="20" viewBox="0 0 23 20"><path d="M0.6 5 H9.6 M4 1.8 L0.8 5 L4 8.2" fill="none" stroke="#3b78bd" stroke-width="1.7"/><text x="14.6" y="8.8" font-family="Liberation Sans" font-size="11.4" fill="#444">0</text><text x="7" y="19" font-family="Liberation Sans" font-size="11.4" fill="#444">00</text></svg>
<svg class="a" style="left:551px;top:161px;" width="23" height="20" viewBox="0 0 23 20"><text x="6" y="8.8" font-family="Liberation Sans" font-size="11.4" fill="#444">00</text><path d="M0.6 15.2 H10 M6.6 12 L9.8 15.2 L6.6 18.4" fill="none" stroke="#3b78bd" stroke-width="1.7"/><text x="12.8" y="19" font-family="Liberation Sans" font-size="11.4" fill="#444">0</text></svg>
<svg class="a" style="left:0px;top:0px;" width="1211" height="230" viewBox="0 0 1211 230"><rect x="647.5" y="93" width="19" height="17" fill="#fff" stroke="#6a6a6a" stroke-width="1.5"/><path d="M660.3 93V110M647.5 98.7H666.5M647.5 104.3H666.5" stroke="#c8c8c8" stroke-width="1"/><rect x="648.4" y="94" width="8.8" height="4" fill="#e0492e"/><path d="M648.4 99.6H659.6L656.4 103.6H648.4Z" fill="#3b78bd"/><rect x="648.4" y="105.2" width="4.2" height="4" fill="#e0492e"/><rect x="656.3" y="103.3" width="12.8" height="11.3" rx="0.8" fill="#fff" stroke="#555" stroke-width="1.6"/><path d="M659.6 107.4H665.8M659.6 110.6H665.8M664.6 105.6L660.8 112.4" stroke="#444" stroke-width="1.3"/><rect x="647.5" y="126.60000000000001" width="21.6" height="17.4" fill="#fff" stroke="#6a6a6a" stroke-width="1.5"/><rect x="652" y="131.9" width="12" height="12" fill="#c5daf0"/><path d="M651.8 126.60000000000001V144.0M658 126.60000000000001V144.0M663.9 126.60000000000001V144.0M647.5 131.9H669M647.5 138.5H669" stroke="#b9b9b9" stroke-width="1.1"/><path d="M673 123.9L673 138.9L664 148.9L652 150.9L650 147.4L655.4 143.1L668 127.10000000000001Z" fill="#fff"/><path d="M669.6 128.70000000000002L670 136.70000000000002L665.8 141.5L663.2 138.9Z" fill="#666"/><path d="M664.6 140.70000000000002Q666.4 144.5 662.6 147.3Q658.4 149.1 652.4 148.3Q656.2 146.5 657.4 143.5Q659.6 139.3 664.6 140.70000000000002Z" fill="#3b78bd"/><circle cx="661.4" cy="143.9" r="1.3" fill="#dbe8f6"/><rect x="647.5" y="160.6" width="21.6" height="17.4" fill="#fff" stroke="#6a6a6a" stroke-width="1.5"/><path d="M651.8 160.6V178.0M664.4 160.6V178.0M647.5 164.3H669M647.5 173.3H669" stroke="#b9b9b9" stroke-width="1.1"/><rect x="652.4" y="164.9" width="11.4" height="7.8" fill="#c5daf0"/><path d="M673 157.9L673 172.9L664 182.9L652 184.9L650 181.4L655.4 177.1L668 161.1Z" fill="#fff"/><path d="M669.6 162.70000000000002L670 170.70000000000002L665.8 175.5L663.2 172.9Z" fill="#666"/><path d="M664.6 174.70000000000002Q666.4 178.5 662.6 181.3Q658.4 183.1 652.4 182.3Q656.2 180.5 657.4 177.5Q659.6 173.3 664.6 174.70000000000002Z" fill="#3b78bd"/><circle cx="661.4" cy="177.9" r="1.3" fill="#dbe8f6"/></svg>
<span class="t" style="left:674px;top:96px;font-size:17.5px;color:#444;transform:translateX(0.33px) scaleX(1.0234);">Formato condicional</span>
<svg class="a" style="left:839.8px;top:103.4px;" width="7.4" height="4.2" viewBox="0 0 7.4 4.2"><path d="M0 0 L7.4 0 L3.7 4.2Z" fill="#666"/></svg>
<span class="t" style="left:674px;top:130px;font-size:17.5px;color:#444;transform:translateX(0.34px) scaleX(1.0142);">Dar formato como tabla</span>
<svg class="a" style="left:864.8px;top:137.4px;" width="7.4" height="4.2" viewBox="0 0 7.4 4.2"><path d="M0 0 L7.4 0 L3.7 4.2Z" fill="#666"/></svg>
<span class="t" style="left:674px;top:164px;font-size:17.5px;color:#444;transform:translateX(0.43px) scaleX(0.9510);">Estilos de celda</span>
<svg class="a" style="left:796.3px;top:170.9px;" width="7.4" height="4.2" viewBox="0 0 7.4 4.2"><path d="M0 0 L7.4 0 L3.7 4.2Z" fill="#666"/></svg>
<svg class="a" style="left:0px;top:0px;" width="1211" height="230" viewBox="0 0 1211 230"><rect x="900.4" y="92.8" width="6.0" height="4.3" fill="#fff" stroke="#707070" stroke-width="1.2"/><rect x="906.4" y="92.8" width="6.0" height="4.3" fill="#fff" stroke="#707070" stroke-width="1.2"/><rect x="900.4" y="106.4" width="6.0" height="4.3" fill="#fff" stroke="#707070" stroke-width="1.2"/><rect x="906.4" y="106.4" width="6.0" height="4.3" fill="#fff" stroke="#707070" stroke-width="1.2"/><rect x="900.4" y="110.6" width="6.0" height="4.3" fill="#fff" stroke="#707070" stroke-width="1.2"/><rect x="906.4" y="110.6" width="6.0" height="4.3" fill="#fff" stroke="#707070" stroke-width="1.2"/><rect x="903.6" y="102.6" width="4.8" height="3.8" fill="#fff" stroke="#707070" stroke-width="1.2"/><rect x="910.2" y="100.2" width="6.2" height="4.2" fill="#cfe0f2" stroke="#707070" stroke-width="1.2"/><rect x="916.4" y="100.2" width="6.2" height="4.2" fill="#cfe0f2" stroke="#707070" stroke-width="1.2"/><path d="M899.8 102.3H908.6" stroke="#3b78bd" stroke-width="2"/><path d="M903.8 98.8L900 102.3L903.8 105.8" fill="none" stroke="#3b78bd" stroke-width="2"/><rect x="900.4" y="126.4" width="6.0" height="4.3" fill="#fff" stroke="#707070" stroke-width="1.2"/><rect x="906.4" y="126.4" width="6.0" height="4.3" fill="#fff" stroke="#707070" stroke-width="1.2"/><rect x="900.4" y="140.2" width="6.0" height="4.3" fill="#fff" stroke="#707070" stroke-width="1.2"/><rect x="906.4" y="140.2" width="6.0" height="4.3" fill="#fff" stroke="#707070" stroke-width="1.2"/><rect x="900.4" y="144.4" width="6.0" height="4.3" fill="#fff" stroke="#707070" stroke-width="1.2"/><rect x="906.4" y="144.4" width="6.0" height="4.3" fill="#fff" stroke="#707070" stroke-width="1.2"/><rect x="905.2" y="133.8" width="6.0" height="4.2" fill="#cfe0f2" stroke="#707070" stroke-width="1.2"/><rect x="900.4" y="137.0" width="4.6" height="3.2" fill="#fff" stroke="#707070" stroke-width="1.2"/><path d="M912.6 132L923.2 141.4M923.2 132L912.6 141.4" stroke="#e0492e" stroke-width="2"/><path d="M900.6 161.5H919" stroke="#3b78bd" stroke-width="1.4"/><path d="M900.2 158.8V164.2M919.4 158.8V164.2" stroke="#3b78bd" stroke-width="1.5"/><path d="M903.6 159.4L901 161.5L903.6 163.6ZM916 159.4L918.6 161.5L916 163.6Z" fill="#3b78bd"/><rect x="900.6" y="165.8" width="21" height="13.4" fill="#fff" stroke="#707070" stroke-width="1.3"/><path d="M904.8 165.8V179.2M911.6 165.8V179.2M917 165.8V179.2M900.6 170H921.6M900.6 175.2H921.6" stroke="#b4b4b4" stroke-width="1"/><rect x="904.8" y="170" width="6.8" height="5.2" fill="#3b78bd"/><path d="M900.6 179.4V181.6H909.6L910.8 180.4L912 181.6H921.6V179.4" fill="none" stroke="#707070" stroke-width="1.1"/></svg>
<span class="t" style="left:927px;top:96px;font-size:17.5px;color:#444;transform:translateX(0.45px) scaleX(0.9578);">Insertar</span>
<svg class="a" style="left:999.3px;top:103.4px;" width="7.4" height="4.2" viewBox="0 0 7.4 4.2"><path d="M0 0 L7.4 0 L3.7 4.2Z" fill="#666"/></svg>
<span class="t" style="left:927px;top:130px;font-size:17.5px;color:#444;transform:translateX(0.59px) scaleX(0.9857);">Eliminar</span>
<svg class="a" style="left:1004.8px;top:137.4px;" width="7.4" height="4.2" viewBox="0 0 7.4 4.2"><path d="M0 0 L7.4 0 L3.7 4.2Z" fill="#666"/></svg>
<span class="t" style="left:927px;top:164px;font-size:17.5px;color:#444;transform:translateX(0.54px) scaleX(1.0161);">Formato</span>
<svg class="a" style="left:997.8px;top:170.9px;" width="7.4" height="4.2" viewBox="0 0 7.4 4.2"><path d="M0 0 L7.4 0 L3.7 4.2Z" fill="#666"/></svg>
<svg class="a" style="left:1037.6px;top:92px;" width="23" height="23" viewBox="0 0 23 23"><path d="M20.8 5.2 V1.4 H2 L11.4 11.2 L2 20.8 H20.8 V17" fill="none" stroke="#444" stroke-width="2.4"/></svg>
<svg class="a" style="left:1069.3px;top:103.4px;" width="7.4" height="4.2" viewBox="0 0 7.4 4.2"><path d="M0 0 L7.4 0 L3.7 4.2Z" fill="#666"/></svg>
<span class="t" style="left:1089px;top:90px;font-size:14.2px;color:#3b78bd;font-weight:700;transform:translateX(0.86px) scaleX(0.9657);">A</span>
<span class="t" style="left:1090px;top:104px;font-size:14.2px;color:#8e44ad;font-weight:700;transform:translateX(0.47px) scaleX(1.0202);">Z</span>
<svg class="a" style="left:1101px;top:99px;" width="11" height="11" viewBox="0 0 11 11"><path d="M0 0.6 H10.6 L6.6 5.2 V10.4 H4 V5.2Z" fill="#555"/></svg>
<svg class="a" style="left:1117.8px;top:103.4px;" width="7.4" height="4.2" viewBox="0 0 7.4 4.2"><path d="M0 0 L7.4 0 L3.7 4.2Z" fill="#666"/></svg>
<svg class="a" style="left:1039px;top:125.6px;" width="21" height="24" viewBox="0 0 21 24"><rect x="0.8" y="0.8" width="19.4" height="22" fill="#fff" stroke="#808080" stroke-width="1.4"/><rect x="0.8" y="0.8" width="19.4" height="4.6" fill="#808080"/><path d="M10.5 8.6 V19.4 M5.4 14.4 L10.5 19.6 L15.6 14.4" fill="none" stroke="#3b78bd" stroke-width="2.8"/></svg>
<svg class="a" style="left:1066.8px;top:137.4px;" width="7.4" height="4.2" viewBox="0 0 7.4 4.2"><path d="M0 0 L7.4 0 L3.7 4.2Z" fill="#666"/></svg>
<svg class="a" style="left:1089px;top:127px;" width="23" height="21" viewBox="0 0 23 21"><path d="M4.6 5.8 L7.4 1 H9.6 V6 M18.4 5.8 L15.6 1 H13.4 V6" fill="#555" stroke="#555" stroke-width="1"/><rect x="0.6" y="6" width="8.6" height="13.6" rx="1.6" fill="#555"/><rect x="13.8" y="6" width="8.6" height="13.6" rx="1.6" fill="#555"/><rect x="9" y="7.6" width="5" height="5.4" fill="#555"/></svg>
<svg class="a" style="left:1117.8px;top:137.4px;" width="7.4" height="4.2" viewBox="0 0 7.4 4.2"><path d="M0 0 L7.4 0 L3.7 4.2Z" fill="#666"/></svg>
<svg class="a" style="left:1038px;top:161px;" width="23" height="20" viewBox="0 0 23 20"><path d="M13.4 0.8 L21.6 7 L11.8 16.6 L4 10.4Z" fill="#e8829a"/><path d="M3.2 11.2 L11 17.4 L9.4 18.8 H5.2 L1 15 Z" fill="#ee9aae"/><path d="M8.6 18.9 H21.6" stroke="#666" stroke-width="1.4"/></svg>
<svg class="a" style="left:1066.8px;top:170.9px;" width="7.4" height="4.2" viewBox="0 0 7.4 4.2"><path d="M0 0 L7.4 0 L3.7 4.2Z" fill="#666"/></svg>
<div class="a " style="left:9px;top:283px;width:1182px;height:31px;background:#fff;"></div>
<svg class="a" style="left:22px;top:293px;" width="17" height="17" viewBox="0 0 17 17"><path d="M17 0 L17 17 L0 17 Z" fill="#dadada"/></svg>
<div class="a " style="left:44px;top:287px;width:1px;height:27px;background:#dadada;"></div>
<div class="a " style="left:78px;top:287px;width:1px;height:27px;background:#dadada;"></div>
<div class="a " style="left:194px;top:287px;width:1px;height:27px;background:#dadada;"></div>
<div class="a " style="left:382px;top:287px;width:1px;height:27px;background:#dadada;"></div>
<div class="a " style="left:660px;top:287px;width:1px;height:27px;background:#dadada;"></div>
<div class="a " style="left:800px;top:287px;width:1px;height:27px;background:#dadada;"></div>
<div class="a " style="left:916px;top:287px;width:1px;height:27px;background:#dadada;"></div>
<div class="a " style="left:1034px;top:287px;width:1px;height:27px;background:#dadada;"></div>
<div class="a " style="left:1150px;top:287px;width:1px;height:27px;background:#dadada;"></div>
<span class="t" style="left:55px;top:291px;font-size:19.0px;color:#4a4a4a;transform:translateX(0.85px) scaleX(0.8600);">A</span>
<span class="t" style="left:130px;top:291px;font-size:19.0px;color:#4a4a4a;transform:translateX(0.91px) scaleX(0.8600);">B</span>
<span class="t" style="left:282px;top:291px;font-size:19.0px;color:#4a4a4a;transform:translateX(0.60px) scaleX(0.8600);">C</span>
<span class="t" style="left:515px;top:291px;font-size:19.0px;color:#4a4a4a;transform:translateX(0.22px) scaleX(0.8600);">D</span>
<span class="t" style="left:724px;top:291px;font-size:19.0px;color:#4a4a4a;transform:translateX(0.53px) scaleX(0.8600);">E</span>
<span class="t" style="left:853px;top:291px;font-size:19.0px;color:#4a4a4a;transform:translateX(0.07px) scaleX(0.8600);">F</span>
<span class="t" style="left:969px;top:291px;font-size:19.0px;color:#4a4a4a;transform:translateX(0.14px) scaleX(0.8600);">G</span>
<span class="t" style="left:1086px;top:291px;font-size:19.0px;color:#4a4a4a;transform:translateX(0.50px) scaleX(0.8600);">H</span>
<div class="a " style="left:44px;top:315px;width:1116px;height:619px;background:#bfbfbf;"></div>
<div class="a " style="left:44px;top:314px;width:1116px;height:1px;background:#dedede;"></div>
<div class="a " style="left:9px;top:314px;width:35px;height:620px;background:#fff;"></div>
<div class="a " style="left:9px;top:344px;width:35px;height:1px;background:#dcdcdc;"></div>
<span class="t" style="left:21px;top:322px;font-size:19.0px;color:#4a4a4a;transform:translateX(0.13px) scaleX(0.9500);">1</span>
<div class="a " style="left:9px;top:374px;width:35px;height:1px;background:#dcdcdc;"></div>
<span class="t" style="left:21px;top:352px;font-size:19.0px;color:#4a4a4a;transform:translateX(0.38px) scaleX(0.9500);">2</span>
<div class="a " style="left:9px;top:403px;width:35px;height:1px;background:#dcdcdc;"></div>
<span class="t" style="left:21px;top:381px;font-size:19.0px;color:#4a4a4a;transform:translateX(0.43px) scaleX(0.9500);">3</span>
<div class="a " style="left:9px;top:432px;width:35px;height:1px;background:#dcdcdc;"></div>
<span class="t" style="left:21px;top:410px;font-size:19.0px;color:#4a4a4a;transform:translateX(0.44px) scaleX(0.9500);">4</span>
<div class="a " style="left:9px;top:462px;width:35px;height:1px;background:#dcdcdc;"></div>
<span class="t" style="left:21px;top:440px;font-size:19.0px;color:#4a4a4a;transform:translateX(0.40px) scaleX(0.9500);">5</span>
<div class="a " style="left:9px;top:491px;width:35px;height:1px;background:#dcdcdc;"></div>
<span class="t" style="left:21px;top:469px;font-size:19.0px;color:#4a4a4a;transform:translateX(0.32px) scaleX(0.9500);">6</span>
<div class="a " style="left:9px;top:520px;width:35px;height:1px;background:#dcdcdc;"></div>
<span class="t" style="left:21px;top:498px;font-size:19.0px;color:#4a4a4a;transform:translateX(0.37px) scaleX(0.9500);">7</span>
<div class="a " style="left:9px;top:549px;width:35px;height:1px;background:#dcdcdc;"></div>
<span class="t" style="left:21px;top:527px;font-size:19.0px;color:#4a4a4a;transform:translateX(0.38px) scaleX(0.9500);">8</span>
<div class="a " style="left:9px;top:579px;width:35px;height:1px;background:#dcdcdc;"></div>
<span class="t" style="left:21px;top:557px;font-size:19.0px;color:#4a4a4a;transform:translateX(0.39px) scaleX(0.9500);">9</span>
<div class="a " style="left:9px;top:608px;width:35px;height:1px;background:#dcdcdc;"></div>
<span class="t" style="left:16px;top:586px;font-size:19.0px;color:#4a4a4a;transform:scaleX(0.9500);">10</span>
<div class="a " style="left:9px;top:637px;width:35px;height:1px;background:#dcdcdc;"></div>
<span class="t" style="left:16px;top:615px;font-size:19.0px;color:#4a4a4a;transform:translateX(0.11px) scaleX(0.9500);">11</span>
<div class="a " style="left:9px;top:666px;width:35px;height:1px;background:#dcdcdc;"></div>
<span class="t" style="left:16px;top:644px;font-size:19.0px;color:#4a4a4a;transform:translateX(0.13px) scaleX(0.9500);">12</span>
<div class="a " style="left:9px;top:696px;width:35px;height:1px;background:#dcdcdc;"></div>
<span class="t" style="left:16px;top:674px;font-size:19.0px;color:#4a4a4a;transform:translateX(0.07px) scaleX(0.9500);">13</span>
<div class="a " style="left:9px;top:725px;width:35px;height:1px;background:#dcdcdc;"></div>
<span class="t" style="left:15px;top:703px;font-size:19.0px;color:#4a4a4a;transform:translateX(0.94px) scaleX(0.9500);">14</span>
<div class="a " style="left:9px;top:754px;width:35px;height:1px;background:#dcdcdc;"></div>
<span class="t" style="left:16px;top:732px;font-size:19.0px;color:#4a4a4a;transform:translateX(0.05px) scaleX(0.9500);">15</span>
<div class="a " style="left:9px;top:784px;width:35px;height:1px;background:#dcdcdc;"></div>
<span class="t" style="left:16px;top:762px;font-size:19.0px;color:#4a4a4a;transform:translateX(0.07px) scaleX(0.9500);">16</span>
<div class="a " style="left:9px;top:813px;width:35px;height:1px;background:#dcdcdc;"></div>
<span class="t" style="left:16px;top:791px;font-size:19.0px;color:#4a4a4a;transform:translateX(0.13px) scaleX(0.9500);">17</span>
<div class="a " style="left:9px;top:842px;width:35px;height:1px;background:#dcdcdc;"></div>
<span class="t" style="left:16px;top:820px;font-size:19.0px;color:#4a4a4a;transform:translateX(0.07px) scaleX(0.9500);">18</span>
<div class="a " style="left:9px;top:871px;width:35px;height:1px;background:#dcdcdc;"></div>
<span class="t" style="left:16px;top:849px;font-size:19.0px;color:#4a4a4a;transform:translateX(0.10px) scaleX(0.9500);">19</span>
<div class="a " style="left:9px;top:901px;width:35px;height:1px;background:#dcdcdc;"></div>
<span class="t" style="left:16px;top:879px;font-size:19.0px;color:#4a4a4a;transform:translateX(0.26px) scaleX(0.9500);">20</span>
<div class="a " style="left:9px;top:930px;width:35px;height:1px;background:#dcdcdc;"></div>
<span class="t" style="left:16px;top:908px;font-size:19.0px;color:#4a4a4a;transform:translateX(0.35px) scaleX(0.9500);">21</span>
<div class="a " style="left:78px;top:345px;width:1073px;height:29px;background:#5b9bd5;"></div>
<div class="a " style="left:78px;top:374px;width:1073px;height:29px;background:#ddebf7;"></div>
<div class="a " style="left:78px;top:403px;width:1073px;height:30px;background:#fff;"></div>
<div class="a " style="left:78px;top:433px;width:1073px;height:29px;background:#ddebf7;"></div>
<div class="a " style="left:78px;top:462px;width:1073px;height:29px;background:#fff;"></div>
<div class="a " style="left:78px;top:491px;width:1073px;height:30px;background:#ddebf7;"></div>
<div class="a " style="left:78px;top:521px;width:1073px;height:29px;background:#fff;"></div>
<div class="a " style="left:78px;top:550px;width:1073px;height:29px;background:#ddebf7;"></div>
<div class="a " style="left:78px;top:579px;width:1073px;height:29px;background:#fff;"></div>
<div class="a " style="left:78px;top:608px;width:1073px;height:30px;background:#ddebf7;"></div>
<div class="a " style="left:78px;top:638px;width:1073px;height:29px;background:#fff;"></div>
<div class="a " style="left:78px;top:667px;width:1073px;height:29px;background:#ddebf7;"></div>
<div class="a " style="left:78px;top:696px;width:1073px;height:30px;background:#fff;"></div>
<div class="a " style="left:78px;top:726px;width:1073px;height:29px;background:#ddebf7;"></div>
<div class="a " style="left:78px;top:755px;width:1073px;height:29px;background:#fff;"></div>
<div class="a " style="left:78px;top:784px;width:1073px;height:29px;background:#ddebf7;"></div>
<div class="a " style="left:78px;top:813px;width:1073px;height:30px;background:#fff;"></div>
<div class="a " style="left:78px;top:843px;width:1073px;height:29px;background:#ddebf7;"></div>
<div class="a " style="left:78px;top:872px;width:1073px;height:29px;background:#fff;"></div>
<div class="a " style="left:77px;top:344px;width:1074px;height:2px;background:#0a0a0a;"></div>
<div class="a " style="left:77px;top:373px;width:1074px;height:2px;background:#0a0a0a;"></div>
<div class="a " style="left:77px;top:402px;width:1074px;height:2px;background:#0a0a0a;"></div>
<div class="a " style="left:77px;top:432px;width:1074px;height:2px;background:#0a0a0a;"></div>
<div class="a " style="left:77px;top:461px;width:1074px;height:2px;background:#0a0a0a;"></div>
<div class="a " style="left:77px;top:490px;width:1074px;height:2px;background:#0a0a0a;"></div>
<div class="a " style="left:77px;top:520px;width:1074px;height:2px;background:#0a0a0a;"></div>
<div class="a " style="left:77px;top:549px;width:1074px;height:2px;background:#0a0a0a;"></div>
<div class="a " style="left:77px;top:578px;width:1074px;height:2px;background:#0a0a0a;"></div>
<div class="a " style="left:77px;top:607px;width:1074px;height:2px;background:#0a0a0a;"></div>
<div class="a " style="left:77px;top:637px;width:1074px;height:2px;background:#0a0a0a;"></div>
<div class="a " style="left:77px;top:666px;width:1074px;height:2px;background:#0a0a0a;"></div>
<div class="a " style="left:77px;top:695px;width:1074px;height:2px;background:#0a0a0a;"></div>
<div class="a " style="left:77px;top:725px;width:1074px;height:2px;background:#0a0a0a;"></div>
<div class="a " style="left:77px;top:754px;width:1074px;height:2px;background:#0a0a0a;"></div>
<div class="a " style="left:77px;top:783px;width:1074px;height:2px;background:#0a0a0a;"></div>
<div class="a " style="left:77px;top:812px;width:1074px;height:2px;background:#0a0a0a;"></div>
<div class="a " style="left:77px;top:842px;width:1074px;height:2px;background:#0a0a0a;"></div>
<div class="a " style="left:77px;top:871px;width:1074px;height:2px;background:#0a0a0a;"></div>
<div class="a " style="left:77px;top:900px;width:1074px;height:2px;background:#0a0a0a;"></div>
<div class="a " style="left:77px;top:344px;width:2px;height:558px;background:#0a0a0a;"></div>
<div class="a " style="left:194px;top:344px;width:2px;height:558px;background:#0a0a0a;"></div>
<div class="a " style="left:381px;top:344px;width:2px;height:558px;background:#0a0a0a;"></div>
<div class="a " style="left:660px;top:344px;width:2px;height:558px;background:#0a0a0a;"></div>
<div class="a " style="left:799px;top:344px;width:2px;height:558px;background:#0a0a0a;"></div>
<div class="a " style="left:916px;top:344px;width:2px;height:558px;background:#0a0a0a;"></div>
<div class="a " style="left:1033px;top:344px;width:2px;height:558px;background:#0a0a0a;"></div>
<div class="a " style="left:1150px;top:344px;width:2px;height:558px;background:#0a0a0a;"></div>
<span class="t" style="left:81px;top:351px;font-size:19.0px;color:#fff;font-weight:700;transform:translateX(0.65px) scaleX(0.9671);-webkit-text-stroke:0;">Código</span>
<div class="a" style="left:169.5px;top:347.4px;width:24.5px;height:23.4px;background:linear-gradient(#ffffff,#eceef2);border:1px solid #fbfbfb;"></div>
<svg class="a" style="left:176.1px;top:357.0px;" width="10.6" height="6.2" viewBox="0 0 10.6 6.2"><path d="M0 0 L10.6 0 L5.3 6.2 Z" fill="#5a5a5a"/></svg>
<span class="t" style="left:198px;top:351px;font-size:19.0px;color:#fff;font-weight:700;transform:translateX(0.44px) scaleX(0.9942);-webkit-text-stroke:0;">Producto</span>
<div class="a" style="left:356.5px;top:347.4px;width:24.5px;height:23.4px;background:linear-gradient(#ffffff,#eceef2);border:1px solid #fbfbfb;"></div>
<svg class="a" style="left:363.1px;top:357.0px;" width="10.6" height="6.2" viewBox="0 0 10.6 6.2"><path d="M0 0 L10.6 0 L5.3 6.2 Z" fill="#5a5a5a"/></svg>
<span class="t" style="left:386px;top:351px;font-size:19.0px;color:#fff;font-weight:700;transform:translateX(0.36px) scaleX(0.9717);-webkit-text-stroke:0;">Descripción</span>
<div class="a" style="left:635.5px;top:347.4px;width:24.5px;height:23.4px;background:linear-gradient(#ffffff,#eceef2);border:1px solid #fbfbfb;"></div>
<svg class="a" style="left:642.1px;top:357.0px;" width="10.6" height="6.2" viewBox="0 0 10.6 6.2"><path d="M0 0 L10.6 0 L5.3 6.2 Z" fill="#5a5a5a"/></svg>
<span class="t" style="left:664px;top:351px;font-size:19.0px;color:#fff;font-weight:700;transform:translateX(0.37px) scaleX(0.9681);-webkit-text-stroke:0;">Stock inicial</span>
<div class="a" style="left:774.5px;top:347.4px;width:24.5px;height:23.4px;background:linear-gradient(#ffffff,#eceef2);border:1px solid #fbfbfb;"></div>
<svg class="a" style="left:781.1px;top:357.0px;" width="10.6" height="6.2" viewBox="0 0 10.6 6.2"><path d="M0 0 L10.6 0 L5.3 6.2 Z" fill="#5a5a5a"/></svg>
<span class="t" style="left:802px;top:351px;font-size:19.0px;color:#fff;font-weight:700;transform:translateX(0.98px) scaleX(0.9627);-webkit-text-stroke:0;">Entradas</span>
<div class="a" style="left:891.5px;top:347.4px;width:24.5px;height:23.4px;background:linear-gradient(#ffffff,#eceef2);border:1px solid #fbfbfb;"></div>
<svg class="a" style="left:898.1px;top:357.0px;" width="10.6" height="6.2" viewBox="0 0 10.6 6.2"><path d="M0 0 L10.6 0 L5.3 6.2 Z" fill="#5a5a5a"/></svg>
<span class="t" style="left:920px;top:351px;font-size:19.0px;color:#fff;font-weight:700;transform:translateX(0.38px) scaleX(0.9508);-webkit-text-stroke:0;">Salidas</span>
<div class="a" style="left:1008.5px;top:347.4px;width:24.5px;height:23.4px;background:linear-gradient(#ffffff,#eceef2);border:1px solid #fbfbfb;"></div>
<svg class="a" style="left:1015.1px;top:357.0px;" width="10.6" height="6.2" viewBox="0 0 10.6 6.2"><path d="M0 0 L10.6 0 L5.3 6.2 Z" fill="#5a5a5a"/></svg>
<span class="t" style="left:1037px;top:351px;font-size:19.0px;color:#fff;font-weight:700;transform:translateX(0.68px) scaleX(1.0108);-webkit-text-stroke:0;">Total</span>
<div class="a" style="left:1125.5px;top:347.4px;width:24.5px;height:23.4px;background:linear-gradient(#ffffff,#eceef2);border:1px solid #fbfbfb;"></div>
<svg class="a" style="left:1132.1px;top:357.0px;" width="10.6" height="6.2" viewBox="0 0 10.6 6.2"><path d="M0 0 L10.6 0 L5.3 6.2 Z" fill="#5a5a5a"/></svg>
<span class="t" style="left:81px;top:381px;font-size:19.0px;color:#000;transform:translateX(0.20px) scaleX(0.9645);-webkit-text-stroke:0.3px #000;">P001</span>
<div class="a" style="left:196px;top:377px;width:185px;height:27.0px;overflow:hidden;"><span class="t" style="left:2px;top:4px;font-size:19.0px;color:#000;transform:scaleX(1.0776);-webkit-text-stroke:0.3px #000;">Papel bond</span></div>
<span class="t" style="left:385px;top:381px;font-size:19.0px;color:#000;transform:translateX(0.48px) scaleX(1.0408);-webkit-text-stroke:0.3px #000;">Paquete 100 hojas</span>
<span class="t" style="left:764px;top:381px;font-size:19.0px;color:#000;transform:translateX(0.80px) scaleX(0.9950);-webkit-text-stroke:0.3px #000;">100</span>
<span class="t" style="left:81px;top:410px;font-size:19.0px;color:#000;transform:translateX(0.18px) scaleX(0.9723);-webkit-text-stroke:0.3px #000;">P002</span>
<div class="a" style="left:196px;top:406px;width:185px;height:27.0px;overflow:hidden;"><span class="t" style="left:2px;top:4px;font-size:19.0px;color:#000;transform:scaleX(1.0783);-webkit-text-stroke:0.3px #000;">Papel vegetal</span></div>
<span class="t" style="left:385px;top:410px;font-size:19.0px;color:#000;transform:translateX(0.48px) scaleX(1.0408);-webkit-text-stroke:0.3px #000;">Paquete 100 hojas</span>
<span class="t" style="left:764px;top:410px;font-size:19.0px;color:#000;transform:translateX(0.61px) scaleX(0.9950);-webkit-text-stroke:0.3px #000;">124</span>
<span class="t" style="left:81px;top:439px;font-size:19.0px;color:#000;transform:translateX(0.20px) scaleX(0.9647);-webkit-text-stroke:0.3px #000;">P003</span>
<div class="a" style="left:196px;top:435px;width:185px;height:27.0px;overflow:hidden;"><span class="t" style="left:2px;top:4px;font-size:19.0px;color:#000;transform:translateX(0.04px) scaleX(1.0625);-webkit-text-stroke:0.3px #000;">Papel de colores</span></div>
<span class="t" style="left:385px;top:439px;font-size:19.0px;color:#000;transform:translateX(0.48px) scaleX(1.0408);-webkit-text-stroke:0.3px #000;">Paquete 100 hojas</span>
<span class="t" style="left:764px;top:439px;font-size:19.0px;color:#000;transform:translateX(0.80px) scaleX(0.9950);-webkit-text-stroke:0.3px #000;">150</span>
<span class="t" style="left:81px;top:468px;font-size:19.0px;color:#000;transform:translateX(0.19px) scaleX(0.9679);-webkit-text-stroke:0.3px #000;">P004</span>
<div class="a" style="left:196px;top:464px;width:185px;height:27.0px;overflow:hidden;"><span class="t" style="left:2px;top:4px;font-size:19.0px;color:#000;transform:scaleX(1.0661);-webkit-text-stroke:0.3px #000;">Papel opalina</span></div>
<span class="t" style="left:385px;top:468px;font-size:19.0px;color:#000;transform:translateX(0.48px) scaleX(1.0408);-webkit-text-stroke:0.3px #000;">Paquete 100 hojas</span>
<span class="t" style="left:764px;top:468px;font-size:19.0px;color:#000;transform:translateX(0.80px) scaleX(0.9950);-webkit-text-stroke:0.3px #000;">100</span>
<span class="t" style="left:81px;top:498px;font-size:19.0px;color:#000;transform:translateX(0.19px) scaleX(0.9663);-webkit-text-stroke:0.3px #000;">P005</span>
<div class="a" style="left:196px;top:494px;width:185px;height:27.0px;overflow:hidden;"><span class="t" style="left:2px;top:4px;font-size:19.0px;color:#000;transform:translateX(0.04px) scaleX(1.0644);-webkit-text-stroke:0.3px #000;">Papel satinado</span></div>
<span class="t" style="left:385px;top:498px;font-size:19.0px;color:#000;transform:translateX(0.48px) scaleX(1.0408);-webkit-text-stroke:0.3px #000;">Paquete 100 hojas</span>
<span class="t" style="left:775px;top:498px;font-size:19.0px;color:#000;transform:translateX(0.31px) scaleX(0.9950);-webkit-text-stroke:0.3px #000;">30</span>
<span class="t" style="left:81px;top:527px;font-size:19.0px;color:#000;transform:translateX(0.79px) scaleX(0.9507);-webkit-text-stroke:0.3px #000;">X001</span>
<div class="a" style="left:196px;top:523px;width:185px;height:27.0px;overflow:hidden;"><span class="t" style="left:2px;top:4px;font-size:19.0px;color:#000;transform:translateX(0.69px) scaleX(1.0463);-webkit-text-stroke:0.3px #000;">Calculadora sencilla</span></div>
<span class="t" style="left:385px;top:527px;font-size:19.0px;color:#000;transform:translateX(0.93px) scaleX(1.1223);-webkit-text-stroke:0.3px #000;">Individual</span>
<span class="t" style="left:764px;top:527px;font-size:19.0px;color:#000;transform:translateX(0.80px) scaleX(0.9950);-webkit-text-stroke:0.3px #000;">300</span>
<span class="t" style="left:81px;top:556px;font-size:19.0px;color:#000;transform:translateX(0.79px) scaleX(0.9583);-webkit-text-stroke:0.3px #000;">X002</span>
<div class="a" style="left:196px;top:552px;width:185px;height:27.0px;overflow:hidden;"><span class="t" style="left:2px;top:4px;font-size:19.0px;color:#000;transform:translateX(0.65px) scaleX(1.0894);-webkit-text-stroke:0.3px #000;">Calculadora infantil</span></div>
<span class="t" style="left:385px;top:556px;font-size:19.0px;color:#000;transform:translateX(0.93px) scaleX(1.1223);-webkit-text-stroke:0.3px #000;">Individual</span>
<span class="t" style="left:765px;top:556px;font-size:19.0px;color:#000;transform:scaleX(0.9950);-webkit-text-stroke:0.3px #000;">257</span>
<span class="t" style="left:81px;top:586px;font-size:19.0px;color:#000;transform:translateX(0.79px) scaleX(0.9510);-webkit-text-stroke:0.3px #000;">X003</span>
<div class="a" style="left:196px;top:582px;width:185px;height:27.0px;overflow:hidden;"><span class="t" style="left:2px;top:4px;font-size:19.0px;color:#000;transform:translateX(0.68px) scaleX(1.0527);-webkit-text-stroke:0.3px #000;">Calculadora profesional</span></div>
<span class="t" style="left:385px;top:586px;font-size:19.0px;color:#000;transform:translateX(0.93px) scaleX(1.1223);-webkit-text-stroke:0.3px #000;">Individual</span>
<span class="t" style="left:764px;top:586px;font-size:19.0px;color:#000;transform:translateX(0.80px) scaleX(0.9950);-webkit-text-stroke:0.3px #000;">200</span>
<span class="t" style="left:81px;top:615px;font-size:19.0px;color:#000;transform:translateX(0.79px) scaleX(0.9541);-webkit-text-stroke:0.3px #000;">X004</span>
<div class="a" style="left:196px;top:611px;width:185px;height:27.0px;overflow:hidden;"><span class="t" style="left:2px;top:4px;font-size:19.0px;color:#000;transform:translateX(0.70px) scaleX(1.0411);-webkit-text-stroke:0.3px #000;">Calculadora especial</span></div>
<span class="t" style="left:385px;top:615px;font-size:19.0px;color:#000;transform:translateX(0.93px) scaleX(1.1223);-webkit-text-stroke:0.3px #000;">Individual</span>
<span class="t" style="left:764px;top:615px;font-size:19.0px;color:#000;transform:translateX(0.88px) scaleX(0.9950);-webkit-text-stroke:0.3px #000;">108</span>
<span class="t" style="left:82px;top:644px;font-size:19.0px;color:#000;transform:translateX(0.16px) scaleX(0.9722);-webkit-text-stroke:0.3px #000;">A001</span>
<div class="a" style="left:196px;top:640px;width:185px;height:27.0px;overflow:hidden;"><span class="t" style="left:2px;top:4px;font-size:19.0px;color:#000;transform:translateX(0.79px) scaleX(1.0305);-webkit-text-stroke:0.3px #000;">Lapiz negro</span></div>
<span class="t" style="left:385px;top:644px;font-size:19.0px;color:#000;transform:translateX(0.93px) scaleX(1.1223);-webkit-text-stroke:0.3px #000;">Individual</span>
<span class="t" style="left:754px;top:644px;font-size:19.0px;color:#000;transform:translateX(0.28px) scaleX(0.9950);-webkit-text-stroke:0.3px #000;">1000</span>
<span class="t" style="left:82px;top:673px;font-size:19.0px;color:#000;transform:translateX(0.16px) scaleX(0.9843);-webkit-text-stroke:0.3px #000;">A002</span>
<div class="a" style="left:196px;top:669px;width:185px;height:27.0px;overflow:hidden;"><span class="t" style="left:2px;top:4px;font-size:19.0px;color:#000;transform:translateX(0.76px) scaleX(1.0497);-webkit-text-stroke:0.3px #000;">Lapiz rojo</span></div>
<span class="t" style="left:385px;top:673px;font-size:19.0px;color:#000;transform:translateX(0.93px) scaleX(1.1223);-webkit-text-stroke:0.3px #000;">Individual</span>
<span class="t" style="left:764px;top:673px;font-size:19.0px;color:#000;transform:translateX(0.61px) scaleX(0.9950);-webkit-text-stroke:0.3px #000;">704</span>
<span class="t" style="left:82px;top:703px;font-size:19.0px;color:#000;transform:translateX(0.16px) scaleX(0.9747);-webkit-text-stroke:0.3px #000;">A003</span>
<div class="a" style="left:196px;top:699px;width:185px;height:27.0px;overflow:hidden;"><span class="t" style="left:2px;top:4px;font-size:19.0px;color:#000;transform:translateX(0.77px) scaleX(1.0458);-webkit-text-stroke:0.3px #000;">Lapiz bicolor</span></div>
<span class="t" style="left:385px;top:703px;font-size:19.0px;color:#000;transform:translateX(0.93px) scaleX(1.1223);-webkit-text-stroke:0.3px #000;">Individual</span>
<span class="t" style="left:764px;top:703px;font-size:19.0px;color:#000;transform:translateX(0.95px) scaleX(0.9950);-webkit-text-stroke:0.3px #000;">499</span>
<span class="t" style="left:82px;top:732px;font-size:19.0px;color:#000;transform:translateX(0.16px) scaleX(0.9776);-webkit-text-stroke:0.3px #000;">A004</span>
<div class="a" style="left:196px;top:728px;width:185px;height:27.0px;overflow:hidden;"><span class="t" style="left:2px;top:4px;font-size:19.0px;color:#000;transform:translateX(0.79px) scaleX(1.0328);-webkit-text-stroke:0.3px #000;">Lápices de colores</span></div>
<span class="t" style="left:385px;top:732px;font-size:19.0px;color:#000;transform:translateX(0.95px) scaleX(0.9845);-webkit-text-stroke:0.3px #000;">Caja de 20</span>
<span class="t" style="left:765px;top:732px;font-size:19.0px;color:#000;transform:scaleX(0.9950);-webkit-text-stroke:0.3px #000;">662</span>
<span class="t" style="left:82px;top:761px;font-size:19.0px;color:#000;transform:translateX(0.62px) scaleX(0.9432);-webkit-text-stroke:0.3px #000;">V001</span>
<div class="a" style="left:196px;top:757px;width:185px;height:27.0px;overflow:hidden;"><span class="t" style="left:2px;top:4px;font-size:19.0px;color:#000;transform:translateX(0.71px) scaleX(1.0252);-webkit-text-stroke:0.3px #000;">Cuaderno rayas</span></div>
<span class="t" style="left:385px;top:761px;font-size:19.0px;color:#000;transform:translateX(0.93px) scaleX(1.1223);-webkit-text-stroke:0.3px #000;">Individual</span>
<span class="t" style="left:754px;top:761px;font-size:19.0px;color:#000;transform:translateX(0.34px) scaleX(0.9950);-webkit-text-stroke:0.3px #000;">1005</span>
<span class="t" style="left:82px;top:790px;font-size:19.0px;color:#000;transform:translateX(0.62px) scaleX(0.9738);-webkit-text-stroke:0.3px #000;">V002</span>
<div class="a" style="left:196px;top:786px;width:185px;height:27.0px;overflow:hidden;"><span class="t" style="left:2px;top:4px;font-size:19.0px;color:#000;transform:translateX(0.72px) scaleX(1.0179);-webkit-text-stroke:0.3px #000;">Cuaderno cuadro grande</span></div>
<span class="t" style="left:385px;top:790px;font-size:19.0px;color:#000;transform:translateX(0.93px) scaleX(1.1223);-webkit-text-stroke:0.3px #000;">Individual</span>
<span class="t" style="left:764px;top:790px;font-size:19.0px;color:#000;transform:translateX(0.80px) scaleX(0.9950);-webkit-text-stroke:0.3px #000;">900</span>
<span class="t" style="left:82px;top:820px;font-size:19.0px;color:#000;transform:translateX(0.62px) scaleX(0.9642);-webkit-text-stroke:0.3px #000;">V003</span>
<div class="a" style="left:196px;top:816px;width:185px;height:27.0px;overflow:hidden;"><span class="t" style="left:2px;top:4px;font-size:19.0px;color:#000;transform:translateX(0.70px) scaleX(1.0336);-webkit-text-stroke:0.3px #000;">Cuaderno cuadro chico</span></div>
<span class="t" style="left:385px;top:820px;font-size:19.0px;color:#000;transform:translateX(0.93px) scaleX(1.1223);-webkit-text-stroke:0.3px #000;">Individual</span>
<span class="t" style="left:764px;top:820px;font-size:19.0px;color:#000;transform:translateX(0.95px) scaleX(0.9950);-webkit-text-stroke:0.3px #000;">999</span>
<span class="t" style="left:82px;top:849px;font-size:19.0px;color:#000;transform:translateX(0.62px) scaleX(0.9672);-webkit-text-stroke:0.3px #000;">V004</span>
<div class="a" style="left:196px;top:845px;width:185px;height:27.0px;overflow:hidden;"><span class="t" style="left:2px;top:4px;font-size:19.0px;color:#000;transform:translateX(0.68px) scaleX(1.0528);-webkit-text-stroke:0.3px #000;">Cuaderno blanco</span></div>
<span class="t" style="left:385px;top:849px;font-size:19.0px;color:#000;transform:translateX(0.93px) scaleX(1.1223);-webkit-text-stroke:0.3px #000;">Individual</span>
<span class="t" style="left:764px;top:849px;font-size:19.0px;color:#000;transform:translateX(0.88px) scaleX(0.9950);-webkit-text-stroke:0.3px #000;">578</span>
<span class="t" style="left:82px;top:878px;font-size:19.0px;color:#000;transform:translateX(0.62px) scaleX(0.9657);-webkit-text-stroke:0.3px #000;">V005</span>
<div class="a" style="left:196px;top:874px;width:185px;height:27.0px;overflow:hidden;"><span class="t" style="left:2px;top:4px;font-size:19.0px;color:#000;transform:translateX(0.70px) scaleX(1.0348);-webkit-text-stroke:0.3px #000;">Cuaderno música</span></div>
<span class="t" style="left:385px;top:878px;font-size:19.0px;color:#000;transform:translateX(0.93px) scaleX(1.1223);-webkit-text-stroke:0.3px #000;">Individual</span>
<span class="t" style="left:765px;top:878px;font-size:19.0px;color:#000;transform:scaleX(0.9950);-webkit-text-stroke:0.3px #000;">302</span>
<svg class="a" style="left:1144px;top:894px;" width="6" height="6" viewBox="0 0 6 6"><path d="M6 0 L6 6 L0 6 L0 4 L4 4 L4 0Z" fill="#2b4fb5"/></svg>
<div class="a " style="left:9px;top:218px;width:1182px;height:1px;background:#d4d4d4;"></div>
<div class="a " style="left:15px;top:234px;width:148px;height:38px;background:#fff;border:1px solid #c0c0c0;"></div>
<span class="t" style="left:24px;top:244px;font-size:19.0px;color:#444;transform:scaleX(0.9419);">E21</span>
<svg class="a" style="left:143.1px;top:249px;" width="10.2" height="5.8" viewBox="0 0 10.2 5.8"><path d="M0 0 L10.2 0 L5.1 5.8Z" fill="#6a6a6a"/></svg>
<div class="a " style="left:184.3px;top:246.1px;width:2.8px;height:2.8px;background:#a0a0a0;"></div>
<div class="a " style="left:184.3px;top:251.8px;width:2.8px;height:2.8px;background:#a0a0a0;"></div>
<div class="a " style="left:184.3px;top:257.5px;width:2.8px;height:2.8px;background:#a0a0a0;"></div>
<div class="a " style="left:207px;top:234px;width:162px;height:38px;background:#fff;border:1px solid #c0c0c0;"></div>
<svg class="a" style="left:222px;top:241px;" width="26" height="24" viewBox="0 0 26 24"><path d="M2.4 2.6 Q13 11 24 22.6" stroke="#c8c8c8" stroke-width="1.8" fill="none"/><path d="M23.6 1.6 Q11 9 1.4 22.4" stroke="#c8c8c8" stroke-width="3.2" fill="none" stroke-linecap="round"/></svg>
<svg class="a" style="left:274px;top:241px;" width="30" height="26" viewBox="0 0 30 26"><path d="M2 13.4 L10.6 22.8 Q16 11 27.4 1.8" stroke="#c8c8c8" stroke-width="4" fill="none" stroke-linejoin="round"/></svg>
<svg class="a" style="left:0px;top:0px;" width="400" height="280" viewBox="0 0 400 280"><path d="M347.6 241 C346.8 236.6 341.4 236.4 339.9 242.4 L334.7 263.6 C333.2 269.6 328.2 269.4 327.2 266" fill="none" stroke="#6a6a6a" stroke-width="2.7" stroke-linecap="round"/><circle cx="347.3" cy="240.6" r="1.9" fill="#6a6a6a"/><circle cx="327.6" cy="266.4" r="1.9" fill="#6a6a6a"/><path d="M332.4 250.8 H344.4" stroke="#6a6a6a" stroke-width="1.9"/><path d="M340.4 253 C343.4 250.2 345.2 252.2 346.2 257.2 C347.2 262.6 349.2 264.6 352.8 261.4" fill="none" stroke="#6a6a6a" stroke-width="2.5"/><path d="M353 252.4 C350.4 250.4 348.8 252.6 346.2 257.4 C343.6 262.2 342 264.4 339.8 262.6" fill="none" stroke="#6a6a6a" stroke-width="1.4"/><circle cx="352.6" cy="252.6" r="1.4" fill="#6a6a6a"/><circle cx="340.3" cy="262.4" r="1.4" fill="#6a6a6a"/></svg>
<div class="a " style="left:373px;top:234px;width:811px;height:38px;background:#fff;border:1px solid #c0c0c0;"></div>
<svg class="a" style="left:1163px;top:250px;" width="17" height="12" viewBox="0 0 17 12"><path d="M1.5 1.5 L8.5 8.5 L15.5 1.5" stroke="#666" stroke-width="4" fill="none"/></svg>
<div class="a " style="left:1160px;top:283px;width:31px;height:651px;background:#fff;"></div>
<div class="a " style="left:1165px;top:312px;width:22px;height:622px;background:#f1f1f1;"></div>
<div class="a " style="left:1165px;top:290px;width:22px;height:21px;background:#fff;border:1px solid #ababab;"></div>
<svg class="a" style="left:1170.5px;top:297px;" width="11" height="6" viewBox="0 0 11 6"><path d="M0 6 L11 6 L5.5 0Z" fill="#666"/></svg>
<div class="a " style="left:1165px;top:312px;width:22px;height:505px;background:#fff;border:1px solid #ababab;"></div>
<div class="a " style="left:1165px;top:914px;width:22px;height:21px;background:#fff;border:1px solid #ababab;"></div>
<svg class="a" style="left:1170.5px;top:922px;" width="11" height="6" viewBox="0 0 11 6"><path d="M0 0 L11 0 L5.5 6Z" fill="#666"/></svg>
<div class="a " style="left:9px;top:934px;width:1182px;height:41px;background:#f5f5f5;"></div>
<div class="a " style="left:9px;top:934px;width:1182px;height:1px;background:#d6d6d6;"></div>
<svg class="a" style="left:47px;top:948px;" width="6" height="11" viewBox="0 0 6 11"><path d="M6 0 L6 11 L0 5.5Z" fill="#c6c6c6"/></svg>
<svg class="a" style="left:88px;top:948px;" width="6" height="11" viewBox="0 0 6 11"><path d="M0 0 L0 11 L6 5.5Z" fill="#c6c6c6"/></svg>
<div class="a " style="left:154px;top:934px;width:128px;height:35px;background:#fff;"></div>
<div class="a " style="left:153px;top:968px;width:129px;height:3px;background:#217346;"></div>
<span class="t" style="left:171px;top:944px;font-size:19.6px;color:#217346;font-weight:700;transform:translateX(0.11px) scaleX(0.9805);">Inventario</span>
<div class="a " style="left:153px;top:934px;width:1px;height:36px;background:#b4b4b4;"></div>
<div class="a " style="left:281px;top:934px;width:1px;height:36px;background:#b4b4b4;"></div>
<span class="t" style="left:298px;top:944px;font-size:19.3px;color:#444;transform:translateX(0.75px) scaleX(0.9818);">Entradas</span>
<div class="a " style="left:394px;top:940px;width:1px;height:29px;background:#ababab;"></div>
<span class="t" style="left:411px;top:944px;font-size:19.3px;color:#444;transform:translateX(0.76px) scaleX(0.9558);">Salidas</span>
<div class="a " style="left:490px;top:940px;width:1px;height:29px;background:#ababab;"></div>
<svg class="a" style="left:540px;top:943px;" width="24" height="24" viewBox="0 0 24 24"><circle cx="12" cy="11.5" r="10.6" fill="none" stroke="#777" stroke-width="1.5"/><path d="M6 11.5 H18 M12 5.5 V17.5" stroke="#555" stroke-width="2.2"/></svg>
<div class="a " style="left:716.8px;top:947.0px;width:2.8px;height:2.8px;background:#a0a0a0;"></div>
<div class="a " style="left:716.8px;top:952.8px;width:2.8px;height:2.8px;background:#a0a0a0;"></div>
<div class="a " style="left:716.8px;top:958.6px;width:2.8px;height:2.8px;background:#a0a0a0;"></div>
<div class="a " style="left:742px;top:945px;width:419px;height:21px;background:#e8e8e8;"></div>
<div class="a " style="left:742px;top:945px;width:22px;height:21px;background:#fff;border:1px solid #ababab;"></div>
<svg class="a" style="left:749px;top:950px;" width="6" height="11" viewBox="0 0 6 11"><path d="M6 0 L6 11 L0 5.5Z" fill="#666"/></svg>
<div class="a " style="left:763px;top:945px;width:263px;height:21px;background:#fff;border:1px solid #ababab;"></div>
<div class="a " style="left:1139px;top:945px;width:22px;height:21px;background:#fff;border:1px solid #ababab;"></div>
<svg class="a" style="left:1148px;top:950px;" width="6" height="11" viewBox="0 0 6 11"><path d="M0 0 L0 11 L6 5.5Z" fill="#666"/></svg>
<div class="a " style="left:9px;top:973px;width:1182px;height:2px;background:#fff;"></div>
<div class="a " style="left:9px;top:975px;width:1182px;height:33px;background:#217346;"></div>
<div class="a " style="left:9px;top:1007px;width:1182px;height:1px;background:#6f8f7f;"></div>
<div class="a " style="left:9px;top:1008px;width:1182px;height:1px;background:#59617a;"></div>
<span class="t" style="left:18px;top:982px;font-size:16.2px;color:#fff;transform:translateX(0.12px) scaleX(0.8902);">LISTO</span>
<div class="a " style="left:743px;top:975px;width:56px;height:33px;background:#0f6236;"></div>
<svg class="a" style="left:760px;top:980px;" width="21" height="21" viewBox="0 0 21 21"><rect x="1" y="1" width="19" height="19" fill="none" stroke="#fff" stroke-width="1.8"/><path d="M7.3 1 V20 M13.7 1 V20 M1 7.3 H20 M1 13.7 H20" stroke="#fff" stroke-width="1.6"/></svg>
<svg class="a" style="left:817px;top:980px;" width="21" height="21" viewBox="0 0 21 21"><rect x="1" y="1" width="19" height="19" fill="none" stroke="#fff" stroke-width="1.8"/><rect x="5.5" y="5.5" width="10" height="10" fill="none" stroke="#fff" stroke-width="1.4"/><path d="M8 8.5 H13 M8 10.8 H13 M8 13 H13" stroke="#fff" stroke-width="1"/></svg>
<svg class="a" style="left:872px;top:980px;" width="21" height="21" viewBox="0 0 21 21"><rect x="1" y="1" width="19" height="19" fill="none" stroke="#fff" stroke-width="1.8"/><rect x="4" y="1" width="5.5" height="10" fill="#fff"/><rect x="11.5" y="1" width="5.5" height="10" fill="#fff"/></svg>
<div class="a " style="left:917px;top:989.5px;width:10px;height:3px;background:#fff;"></div>
<div class="a " style="left:932px;top:990.5px;width:146px;height:1.5px;background:#fff;"></div>
<div class="a " style="left:1003px;top:982px;width:5px;height:18px;background:#fff;"></div>
<div class="a " style="left:1084px;top:989.5px;width:13px;height:3px;background:#fff;"></div>
<div class="a " style="left:1089px;top:984.5px;width:3px;height:13px;background:#fff;"></div>
<span class="t" style="left:1119px;top:982px;font-size:16.2px;color:#fff;transform:translateX(0.70px) scaleX(0.9723);">100 %</span>
</body></html>
